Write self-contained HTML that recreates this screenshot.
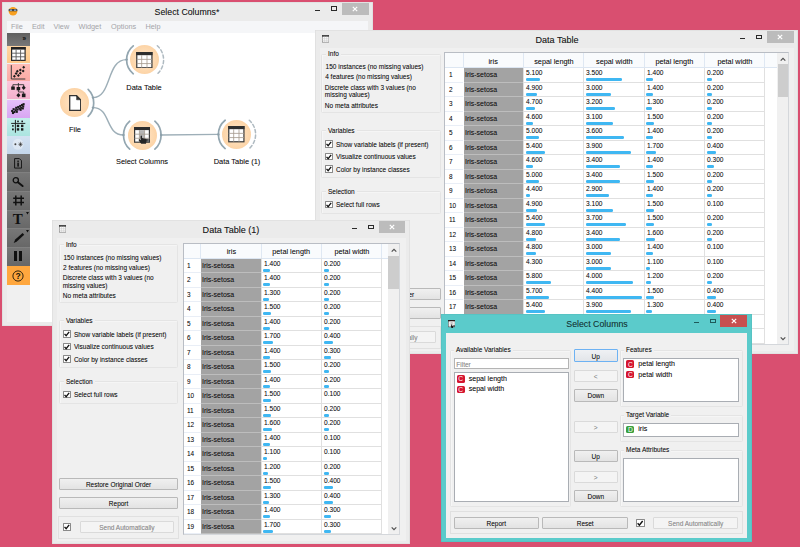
<!DOCTYPE html>
<html><head><meta charset="utf-8"><title>Select Columns</title>
<style>
html,body{margin:0;padding:0}
body{width:800px;height:547px;overflow:hidden;background:#d94f70;position:relative;font-family:"Liberation Sans",sans-serif}
div,svg{position:absolute}
.win{overflow:hidden;box-shadow:inset 0 0 0 0.6px rgba(0,0,0,0.07)}
.g{width:800px;height:547px}
.t{white-space:nowrap;text-shadow:0 0 0.6px rgba(0,0,0,0.35)}
.ti{font-family:"Liberation Sans",sans-serif}
</style></head><body>

<div class="win" style="left:2.00px;top:2.00px;width:371.00px;height:324.00px;background:#ebebeb;z-index:1"><div class="g" style="left:-2.00px;top:-2.00px">
<svg class="a" style="left:7.5px;top:6px" width="10" height="10" viewBox="0 0 10 10"><circle cx="5" cy="5.2" r="4.3" fill="#f7a021"/><rect x="0.6" y="3" width="8.8" height="2.3" rx="0.8" fill="#333"/><rect x="1.6" y="3.5" width="2.6" height="1.3" fill="#9bd"/><rect x="5.8" y="3.5" width="2.6" height="1.3" fill="#9bd"/></svg>
<div class="t ti" style="left:116.70px;width:140.00px;text-align:center;top:1.50px;height:19.60px;line-height:19.60px;font-size:9.8px;color:#222;;transform:scaleX(0.895);transform-origin:50% 50%">Select Columns*</div>
<div style="left:342.00px;top:2.90px;width:26.70px;height:11.70px;background:#bcbcbc"></div>
<svg class="a" style="left:352.35px;top:5.90px" width="6" height="6" viewBox="0 0 6 6"><path d="M0.8 0.8L5.2 5.2M5.2 0.8L0.8 5.2" stroke="#fff" stroke-width="1.2" fill="none"/></svg>
<div style="left:330.70px;top:6.30px;width:6.20px;height:4.90px;border:0.8px solid #2a2a2a;border-top-width:1.7px;box-sizing:border-box"></div>
<div style="left:314.90px;top:9.50px;width:5.10px;height:1.50px;background:#2a2a2a"></div>
<div style="left:6.50px;top:21.00px;width:361.50px;height:11.50px;background:#f5f6f8"></div>
<div class="t" style="left:11.00px;top:19.80px;height:14.60px;line-height:14.60px;font-size:7.3px;color:#a4a4a8;text-shadow:none">File</div>
<div class="t" style="left:32.00px;top:19.80px;height:14.60px;line-height:14.60px;font-size:7.3px;color:#a4a4a8;text-shadow:none">Edit</div>
<div class="t" style="left:53.50px;top:19.80px;height:14.60px;line-height:14.60px;font-size:7.3px;color:#a4a4a8;text-shadow:none">View</div>
<div class="t" style="left:78.50px;top:19.80px;height:14.60px;line-height:14.60px;font-size:7.3px;color:#a4a4a8;text-shadow:none">Widget</div>
<div class="t" style="left:111.00px;top:19.80px;height:14.60px;line-height:14.60px;font-size:7.3px;color:#a4a4a8;text-shadow:none">Options</div>
<div class="t" style="left:145.50px;top:19.80px;height:14.60px;line-height:14.60px;font-size:7.3px;color:#a4a4a8;text-shadow:none">Help</div>
<div style="left:6.50px;top:33.00px;width:361.50px;height:288.50px;background:#fff"></div>
<div style="left:6.90px;top:33.00px;width:22.80px;height:288.50px;background:#f0f0f0"></div>
<div style="left:6.90px;top:33.20px;width:22.80px;height:12.40px;background:linear-gradient(#606060,#787878)"></div>
<div class="t" style="left:6.20px;width:20.00px;text-align:right;top:30.60px;height:16.00px;line-height:16.00px;font-size:8px;color:#0a0a0a;font-weight:bold;text-shadow:none;transform:scaleX(0.8);transform-origin:100% 50%">»</div>
<div style="left:6.90px;top:45.60px;width:22.80px;height:17.90px;background:linear-gradient(#ffd6a3,#fec88a)"></div>
<div style="left:6.90px;top:63.50px;width:22.80px;height:17.60px;background:linear-gradient(#ffbdb6,#fbaaa5)"></div>
<div style="left:6.90px;top:81.10px;width:22.80px;height:18.40px;background:linear-gradient(#fcc7dc,#f4b1cd)"></div>
<div style="left:6.90px;top:99.50px;width:22.80px;height:18.20px;background:linear-gradient(#e6c0fa,#d8a6f2)"></div>
<div style="left:6.90px;top:117.70px;width:22.80px;height:17.90px;background:linear-gradient(#c3efeb,#abe4e0)"></div>
<div style="left:6.90px;top:135.60px;width:22.80px;height:18.10px;background:linear-gradient(#d3e2f2,#c4d6ea)"></div>
<svg class="a" style="left:10.9px;top:47.3px" width="14.7" height="14" viewBox="0 0 14.7 14"><rect x="0.6" y="0.6" width="13.5" height="12.8" fill="#fff" stroke="#2c2c2c" stroke-width="1.2"/><rect x="0" y="0" width="14.7" height="2.6" fill="#222"/><path d="M5.1 2.6V13.4M9.6 2.6V13.4M0.6 6.2H14.1M0.6 9.8H14.1" stroke="#5a5a5a" stroke-width="0.9"/></svg>
<svg class="a" style="left:0;top:0" width="40" height="300" viewBox="0 0 40 300"><path d="M11.3 65.1V79H25.3" stroke="#3a3a3a" stroke-width="1" fill="none"/><g fill="#1c1c1c"><path d="M14.4 74.8L15.9 76.3L14.4 77.8L12.9 76.3Z"/><path d="M16.1 72.0L17.6 73.5L16.1 75.0L14.600000000000001 73.5Z"/><path d="M17.3 69.7L18.8 71.2L17.3 72.7L15.8 71.2Z"/><path d="M18.4 73.9L19.9 75.4L18.4 76.9L16.9 75.4Z"/><path d="M20.3 71.7L21.8 73.2L20.3 74.7L18.8 73.2Z"/><path d="M20.3 68.4L21.8 69.9L20.3 71.4L18.8 69.9Z"/><path d="M23.1 69.4L24.6 70.9L23.1 72.4L21.6 70.9Z"/><path d="M23.7 65.8L25.2 67.3L23.7 68.8L22.2 67.3Z"/></g><path d="M18.4 83V90M12.9 88V84.7H23.7V88M18.4 90V92H23.7V94" stroke="#333" stroke-width="0.9" fill="none"/><g fill="#1c1c1c"><rect x="11.2" y="86.5" width="3.6" height="3.3"/><rect x="16.6" y="87" width="3.6" height="3.3"/><path d="M23.7 85.6L25.7 87.8L23.7 90L21.7 87.8Z"/><path d="M18.4 93L20.4 95.2L18.4 97.4L16.4 95.2Z"/><rect x="21.9" y="93.6" width="3.6" height="3.6"/></g><g fill="#1c1c1c"><rect x="11.15" y="109.95" width="2.1" height="2.1"/><rect x="12.55" y="108.15" width="2.1" height="2.1"/><rect x="13.35" y="110.95" width="2.1" height="2.1"/><rect x="14.55" y="109.15" width="2.1" height="2.1"/><rect x="15.15" y="106.75" width="2.1" height="2.1"/><rect x="16.35" y="108.55" width="2.1" height="2.1"/><rect x="17.15" y="105.95" width="2.1" height="2.1"/><rect x="18.35" y="107.55" width="2.1" height="2.1"/><rect x="19.15" y="104.95" width="2.1" height="2.1"/><rect x="20.15" y="106.75" width="2.1" height="2.1"/><rect x="20.95" y="103.95" width="2.1" height="2.1"/><rect x="22.15" y="105.35" width="2.1" height="2.1"/><rect x="22.55" y="103.15" width="2.1" height="2.1"/><rect x="11.95" y="111.95" width="2.1" height="2.1"/><rect x="15.75" y="110.75" width="2.1" height="2.1"/><rect x="19.55" y="108.75" width="2.1" height="2.1"/><rect x="21.75" y="107.35" width="2.1" height="2.1"/></g><path d="M15.4 119.9V132.7M11.2 123.4H25.3" stroke="#222" stroke-width="1" fill="none"/><g fill="#1c1c1c"><rect x="17.20" y="120.60" width="1.6" height="1.6"/><rect x="21.40" y="120.60" width="1.6" height="1.6"/><rect x="12.10" y="125.10" width="1.6" height="1.6"/><rect x="12.00" y="128.50" width="1.8" height="1.8"/><rect x="16.80" y="124.70" width="2.4" height="2.4"/><rect x="21.00" y="124.70" width="2.4" height="2.4"/><rect x="16.80" y="128.20" width="2.4" height="2.4"/><rect x="21.00" y="128.20" width="2.4" height="2.4"/></g><circle cx="18" cy="144.3" r="5.5" fill="rgba(255,255,255,0.35)"/><circle cx="15.4" cy="144.3" r="1" fill="#444"/><g stroke="#666" stroke-width="0.7"><path d="M20.5 141.8V146.8M18.3 144.3H22.7M19 142.6L22 146M22 142.6L19 146"/></g><circle cx="20.5" cy="144.3" r="0.9" fill="#333"/></svg>
<div style="left:6.90px;top:153.70px;width:22.80px;height:112.30px;background:#6b6b6b"></div>
<div style="left:6.90px;top:153.70px;width:22.80px;height:18.72px;background:linear-gradient(#777,#676767)"></div>
<div style="left:6.90px;top:172.42px;width:22.80px;height:18.72px;background:linear-gradient(#777,#676767)"></div>
<div style="left:6.90px;top:172.12px;width:22.80px;height:0.60px;background:#808080"></div>
<div style="left:6.90px;top:191.14px;width:22.80px;height:18.72px;background:linear-gradient(#777,#676767)"></div>
<div style="left:6.90px;top:190.84px;width:22.80px;height:0.60px;background:#808080"></div>
<div style="left:6.90px;top:209.86px;width:22.80px;height:18.72px;background:linear-gradient(#777,#676767)"></div>
<div style="left:6.90px;top:209.56px;width:22.80px;height:0.60px;background:#808080"></div>
<div style="left:6.90px;top:228.58px;width:22.80px;height:18.72px;background:linear-gradient(#777,#676767)"></div>
<div style="left:6.90px;top:228.28px;width:22.80px;height:0.60px;background:#808080"></div>
<div style="left:6.90px;top:247.30px;width:22.80px;height:18.72px;background:linear-gradient(#777,#676767)"></div>
<div style="left:6.90px;top:247.00px;width:22.80px;height:0.60px;background:#808080"></div>
<svg class="a" style="left:14.1px;top:157.9px" width="8.2" height="10.7" viewBox="0 0 8.2 10.7"><path d="M0.6 0.6H5.4L7.6 2.8V10.1H0.6Z" fill="none" stroke="#151515" stroke-width="1"/><rect x="3.3" y="4.6" width="1.6" height="4" fill="#151515"/><rect x="3.3" y="2.6" width="1.6" height="1.3" fill="#151515"/></svg>
<svg class="a" style="left:11px;top:175px" width="14" height="13" viewBox="0 0 14 13"><circle cx="4.8" cy="5.3" r="2.6" fill="none" stroke="#111" stroke-width="1.3"/><path d="M6.9 7.2L11.6 11" stroke="#111" stroke-width="2" stroke-linecap="round"/></svg>
<svg class="a" style="left:12px;top:194px" width="14" height="13" viewBox="0 0 14 13"><path d="M3.8 1.4V11.6M9.2 1.4V11.6M1.2 4.3H12M1.2 8.4H12" stroke="#111" stroke-width="1.5" fill="none"/></svg>
<div class="t" style="left:7.80px;width:20.00px;text-align:center;top:204.20px;height:30.00px;line-height:30.00px;font-size:15px;color:#111;font-weight:bold;font-family:'Liberation Serif',serif;text-shadow:none">T</div>
<svg class="a" style="left:12.5px;top:232px" width="12" height="12" viewBox="0 0 12 12"><path d="M0.7 11.1L2.2 7.6L9.6 1L11.2 2.8L3.6 9.8Z" fill="#111"/></svg>
<svg class="a" style="left:25.6px;top:211.5px" width="3" height="3" viewBox="0 0 3 3"><path d="M0 0H3L1.5 2.4Z" fill="#111"/></svg>
<svg class="a" style="left:25.6px;top:230px" width="3" height="3" viewBox="0 0 3 3"><path d="M0 0H3L1.5 2.4Z" fill="#111"/></svg>
<div style="left:13.70px;top:250.90px;width:3.40px;height:10.40px;background:#111"></div>
<div style="left:19.10px;top:250.90px;width:3.40px;height:10.40px;background:#111"></div>
<div style="left:6.90px;top:266.00px;width:22.80px;height:18.60px;background:#ffa73e"></div>
<svg class="a" style="left:12.3px;top:269.8px" width="12" height="12" viewBox="0 0 12 12"><circle cx="6" cy="6" r="5.1" fill="none" stroke="#1a1408" stroke-width="0.9"/><text x="6" y="8.9" font-size="8.5" font-weight="bold" text-anchor="middle" font-family="Liberation Sans, sans-serif" fill="#1a1408">?</text></svg>
<svg class="a" style="left:0;top:0" width="400" height="330" viewBox="0 0 400 330"><path d="M93 97.6C112 97.6 106 59.6 126.6 59.6" stroke="#9eafb8" stroke-width="1.4" fill="none"/><path d="M93 107.6C111 107.6 105 135 123.5 135" stroke="#9eafb8" stroke-width="1.4" fill="none"/><path d="M161.1 135L218.4 134.4" stroke="#9eafb8" stroke-width="1.4" fill="none"/><path d="M88.14 89.46A19 19 0 0 1 88.14 116.34" stroke="#93a6b0" stroke-width="1.7" fill="none" stroke-linecap="round"/><path d="M133.27 73.84A18 18 0 0 1 133.27 45.86" stroke="#93a6b0" stroke-width="1.7" fill="none" stroke-linecap="round"/><path d="M157.31 45.73A19 19 0 0 1 157.31 73.97" stroke="#afbac1" stroke-width="1.5" fill="none" stroke-dasharray="3.1 2.4" stroke-linecap="round"/><path d="M129.72 149.17A18.8 18.8 0 0 1 129.72 121.23" stroke="#93a6b0" stroke-width="1.7" fill="none" stroke-linecap="round"/><path d="M154.88 121.23A18.8 18.8 0 0 1 154.88 149.17" stroke="#93a6b0" stroke-width="1.7" fill="none" stroke-linecap="round"/><path d="M225.15 148.54A18.2 18.2 0 0 1 225.15 120.26" stroke="#93a6b0" stroke-width="1.7" fill="none" stroke-linecap="round"/><path d="M249.31 120.28A19 19 0 0 1 249.31 148.52" stroke="#afbac1" stroke-width="1.5" fill="none" stroke-dasharray="3.1 2.4" stroke-linecap="round"/><circle cx="93" cy="97.6" r="1.2" fill="#8da0aa"/><circle cx="93" cy="107.6" r="1.2" fill="#8da0aa"/><circle cx="126.6" cy="59.6" r="1.2" fill="#8da0aa"/><circle cx="123.5" cy="135" r="1.2" fill="#8da0aa"/><circle cx="161.1" cy="135" r="1.2" fill="#8da0aa"/><circle cx="218.4" cy="134.4" r="1.2" fill="#8da0aa"/></svg>
<div style="left:60.20px;top:88.40px;width:29.0px;height:29.0px;border-radius:50%;background:radial-gradient(circle at 50% 50%,#ffe6ca 0%,#fdd8ae 55%,#fbcd9b 92%,rgba(251,205,155,0.4) 100%)"></div>
<div style="left:130.00px;top:45.25px;width:29.2px;height:29.2px;border-radius:50%;background:radial-gradient(circle at 50% 50%,#ffe6ca 0%,#fdd8ae 55%,#fbcd9b 92%,rgba(251,205,155,0.4) 100%)"></div>
<div style="left:127.70px;top:120.60px;width:29.2px;height:29.2px;border-radius:50%;background:radial-gradient(circle at 50% 50%,#ffe6ca 0%,#fdd8ae 55%,#fbcd9b 92%,rgba(251,205,155,0.4) 100%)"></div>
<div style="left:222.00px;top:119.80px;width:29.2px;height:29.2px;border-radius:50%;background:radial-gradient(circle at 50% 50%,#ffe6ca 0%,#fdd8ae 55%,#fbcd9b 92%,rgba(251,205,155,0.4) 100%)"></div>
<svg class="a" style="left:68.9px;top:94.9px" width="12.4" height="16" viewBox="0 0 12.4 16"><path d="M0.7 0.7H7.6L11.7 4.8V15.3H0.7Z" fill="#fff" stroke="#333" stroke-width="1.3"/><path d="M7.6 0.7V4.8H11.7Z" fill="#333" stroke="#333" stroke-width="0.6"/></svg>
<svg class="a" style="left:136.20px;top:51.90px" width="16.70" height="16.40" viewBox="0 0 16 16"><rect x="0.6" y="0.6" width="14.8" height="14.8" fill="#fff" stroke="#3a3a3a" stroke-width="1.2"/><rect x="0" y="0" width="16" height="3.1" fill="#2e2e2e"/><path d="M5.4 3.1V15.4M10.6 3.1V15.4M0.6 7.2H15.4M0.6 11.3H15.4" stroke="#a59a90" stroke-width="0.8"/></svg>
<svg class="a" style="left:228.30px;top:126.30px" width="16.70" height="16.40" viewBox="0 0 16 16"><rect x="0.6" y="0.6" width="14.8" height="14.8" fill="#fff" stroke="#3a3a3a" stroke-width="1.2"/><rect x="0" y="0" width="16" height="3.1" fill="#2e2e2e"/><path d="M5.4 3.1V15.4M10.6 3.1V15.4M0.6 7.2H15.4M0.6 11.3H15.4" stroke="#a59a90" stroke-width="0.8"/></svg>
<svg class="a" style="left:134px;top:127px" width="16" height="16.7" viewBox="0 0 16 16.7"><rect x="0.6" y="0.6" width="14.8" height="14.6" fill="#fff" stroke="#3a3a3a" stroke-width="1.2"/><rect x="0" y="0" width="16" height="3.1" fill="#2e2e2e"/><rect x="5.4" y="3.1" width="5.2" height="8" fill="#b5b5b5"/><path d="M5.4 3.1V15.2M10.6 3.1V15.2M0.6 7.2H15.4M0.6 11.3H15.4" stroke="#a59a90" stroke-width="0.8"/><rect x="11.6" y="11.8" width="3.2" height="3" fill="#555"/><path d="M6.6 9.2C6.6 8.2 8 8.2 8 9.2V11L11.6 11.8C12.6 12 12.8 12.8 12.6 13.8L12 16.7H7.2L4.8 13.4C4.4 12.6 5.4 12 6 12.6L6.6 13.2Z" fill="#262626"/></svg>
<div class="t" style="left:44.60px;width:60.00px;text-align:center;top:122.30px;height:16.00px;line-height:16.00px;font-size:8px;color:#222;;transform:scaleX(0.93);transform-origin:50% 50%">File</div>
<div class="t" style="left:104.40px;width:80.00px;text-align:center;top:79.60px;height:16.00px;line-height:16.00px;font-size:8px;color:#222;;transform:scaleX(0.93);transform-origin:50% 50%">Data Table</div>
<div class="t" style="left:97.00px;width:90.00px;text-align:center;top:154.10px;height:16.00px;line-height:16.00px;font-size:8px;color:#222;;transform:scaleX(0.93);transform-origin:50% 50%">Select Columns</div>
<div class="t" style="left:191.70px;width:90.00px;text-align:center;top:153.50px;height:16.00px;line-height:16.00px;font-size:8px;color:#222;;transform:scaleX(0.93);transform-origin:50% 50%">Data Table (1)</div>
</div></div>
<div class="win" style="left:315.10px;top:30.20px;width:482.90px;height:324.20px;background:#ebebeb;z-index:2"><div class="g" style="left:-315.10px;top:-30.20px">
<svg class="a" style="left:322.00px;top:35.30px" width="7.20" height="7.70" viewBox="0 0 8 8"><rect x="0.3" y="0.3" width="7.4" height="7.4" fill="#fbfbfb" stroke="#6a6a6a" stroke-width="0.6"/><rect x="0" y="0" width="8" height="1.5" fill="#2a2a2a"/><path d="M2.8 1.5V7.7M5.2 1.5V7.7M0.3 3.7H7.7M0.3 5.7H7.7" stroke="#c8c8c8" stroke-width="0.5"/></svg>
<div class="t ti" style="left:496.55px;width:120.00px;text-align:center;top:29.80px;height:19.60px;line-height:19.60px;font-size:9.8px;color:#222;;transform:scaleX(0.925);transform-origin:50% 50%">Data Table</div>
<div style="left:767.00px;top:31.10px;width:26.70px;height:11.70px;background:#bcbcbc"></div>
<svg class="a" style="left:777.35px;top:34.10px" width="6" height="6" viewBox="0 0 6 6"><path d="M0.8 0.8L5.2 5.2M5.2 0.8L0.8 5.2" stroke="#fff" stroke-width="1.2" fill="none"/></svg>
<div style="left:755.70px;top:34.50px;width:6.20px;height:4.90px;border:0.8px solid #2a2a2a;border-top-width:1.7px;box-sizing:border-box"></div>
<div style="left:739.90px;top:37.70px;width:5.10px;height:1.50px;background:#2a2a2a"></div>
<div style="left:319.70px;top:48.40px;width:474.50px;height:302.30px;background:#f0f0f0"></div>
<div style="left:320.90px;top:54.20px;width:120.40px;height:59.20px;border:1px solid #e4e4e4;box-sizing:border-box;border-radius:1.5px;box-shadow:inset 0.6px 0.6px 0 rgba(255,255,255,0.7)"></div>
<div style="left:326.00px;top:53.70px;width:14.84px;height:2.50px;background:#f0f0f0"></div>
<div class="t" style="left:328.00px;top:47.20px;height:13.00px;line-height:13.00px;font-size:6.5px;color:#1a1a1a;">Info</div>
<div class="t" style="left:325.60px;top:59.80px;height:13.00px;line-height:13.00px;font-size:6.5px;color:#1a1a1a;">150 instances (no missing values)</div>
<div class="t" style="left:325.20px;top:70.10px;height:13.00px;line-height:13.00px;font-size:6.5px;color:#1a1a1a;">4 features (no missing values)</div>
<div class="t" style="left:324.80px;top:81.00px;height:13.00px;line-height:13.00px;font-size:6.5px;color:#1a1a1a;">Discrete class with 3 values (no</div>
<div class="t" style="left:324.80px;top:88.10px;height:13.00px;line-height:13.00px;font-size:6.5px;color:#1a1a1a;">missing values)</div>
<div class="t" style="left:324.80px;top:98.90px;height:13.00px;line-height:13.00px;font-size:6.5px;color:#1a1a1a;">No meta attributes</div>
<div style="left:320.90px;top:130.40px;width:120.40px;height:47.60px;border:1px solid #e4e4e4;box-sizing:border-box;border-radius:1.5px;box-shadow:inset 0.6px 0.6px 0 rgba(255,255,255,0.7)"></div>
<div style="left:326.00px;top:129.90px;width:30.61px;height:2.50px;background:#f0f0f0"></div>
<div class="t" style="left:328.00px;top:124.40px;height:13.00px;line-height:13.00px;font-size:6.5px;color:#1a1a1a;">Variables</div>
<div style="left:325.30px;top:140.40px;width:7.60px;height:7.60px;background:#fff;border:0.8px solid #8a8a8a;box-sizing:border-box;border-radius:0.5px"></div>
<svg class="a" style="left:325.30px;top:140.40px" width="7.6" height="7.6" viewBox="0 0 8 8"><path d="M1.6 4.1L3.3 6L6.5 1.9" stroke="#111" stroke-width="1.4" fill="none"/></svg>
<div class="t" style="left:336.00px;top:137.70px;height:13.00px;line-height:13.00px;font-size:6.5px;color:#1a1a1a;">Show variable labels (if present)</div>
<div style="left:325.30px;top:152.60px;width:7.60px;height:7.60px;background:#fff;border:0.8px solid #8a8a8a;box-sizing:border-box;border-radius:0.5px"></div>
<svg class="a" style="left:325.30px;top:152.60px" width="7.6" height="7.6" viewBox="0 0 8 8"><path d="M1.6 4.1L3.3 6L6.5 1.9" stroke="#111" stroke-width="1.4" fill="none"/></svg>
<div class="t" style="left:336.00px;top:150.40px;height:13.00px;line-height:13.00px;font-size:6.5px;color:#1a1a1a;">Visualize continuous values</div>
<div style="left:325.30px;top:165.20px;width:7.60px;height:7.60px;background:#fff;border:0.8px solid #8a8a8a;box-sizing:border-box;border-radius:0.5px"></div>
<svg class="a" style="left:325.30px;top:165.20px" width="7.6" height="7.6" viewBox="0 0 8 8"><path d="M1.6 4.1L3.3 6L6.5 1.9" stroke="#111" stroke-width="1.4" fill="none"/></svg>
<div class="t" style="left:336.00px;top:163.00px;height:13.00px;line-height:13.00px;font-size:6.5px;color:#1a1a1a;">Color by instance classes</div>
<div style="left:320.90px;top:190.70px;width:120.40px;height:22.90px;border:1px solid #e4e4e4;box-sizing:border-box;border-radius:1.5px;box-shadow:inset 0.6px 0.6px 0 rgba(255,255,255,0.7)"></div>
<div style="left:326.00px;top:190.20px;width:30.74px;height:2.50px;background:#f0f0f0"></div>
<div class="t" style="left:328.00px;top:184.70px;height:13.00px;line-height:13.00px;font-size:6.5px;color:#1a1a1a;">Selection</div>
<div style="left:325.30px;top:200.50px;width:7.60px;height:7.60px;background:#fff;border:0.8px solid #8a8a8a;box-sizing:border-box;border-radius:0.5px"></div>
<svg class="a" style="left:325.30px;top:200.50px" width="7.6" height="7.6" viewBox="0 0 8 8"><path d="M1.6 4.1L3.3 6L6.5 1.9" stroke="#111" stroke-width="1.4" fill="none"/></svg>
<div class="t" style="left:336.00px;top:197.80px;height:13.00px;line-height:13.00px;font-size:6.5px;color:#1a1a1a;">Select full rows</div>
<div style="left:321.70px;top:287.70px;width:119.60px;height:12.30px;background:linear-gradient(#f0f0f0,#e3e3e3);border:1px solid #b9b9b9;box-sizing:border-box;border-radius:1px"></div>
<div class="t" style="left:321.70px;width:119.60px;text-align:center;top:287.85px;height:13.00px;line-height:13.00px;font-size:6.5px;color:#1a1a1a;">Restore Original Order</div>
<div style="left:321.70px;top:306.90px;width:119.60px;height:12.30px;background:linear-gradient(#f0f0f0,#e3e3e3);border:1px solid #b9b9b9;box-sizing:border-box;border-radius:1px"></div>
<div class="t" style="left:321.70px;width:119.60px;text-align:center;top:307.05px;height:13.00px;line-height:13.00px;font-size:6.5px;color:#1a1a1a;">Report</div>
<div style="left:320.90px;top:325.80px;width:120.60px;height:22.90px;border:1px solid #e0e0e0;box-sizing:border-box"></div>
<div style="left:325.90px;top:333.40px;width:7.60px;height:7.60px;background:#fff;border:0.8px solid #8a8a8a;box-sizing:border-box;border-radius:0.5px"></div>
<svg class="a" style="left:325.90px;top:333.40px" width="7.6" height="7.6" viewBox="0 0 8 8"><path d="M1.6 4.1L3.3 6L6.5 1.9" stroke="#111" stroke-width="1.4" fill="none"/></svg>
<div style="left:343.10px;top:331.40px;width:93.40px;height:12.00px;background:#f4f4f4;border:1px solid #dadada;box-sizing:border-box;border-radius:1px"></div>
<div class="t" style="left:343.10px;width:93.40px;text-align:center;top:331.40px;height:13.00px;line-height:13.00px;font-size:6.5px;color:#9a9a9a;">Send Automatically</div>
<div style="left:445.30px;top:52.70px;width:342.90px;height:291.00px;background:#fff;overflow:hidden"><div class="g" style="left:-445.30px;top:-52.70px">
<div style="left:445.30px;top:52.70px;width:332.40px;height:14.80px;background:#f9fbfd"></div>
<div style="left:445.30px;top:67.00px;width:332.40px;height:1.00px;background:#dce6f2"></div>
<div class="t" style="left:463.30px;width:60.30px;text-align:center;top:55.20px;height:14.80px;line-height:14.80px;font-size:7.4px;color:#222;;transform:scaleX(0.99);transform-origin:50% 50%">iris</div>
<div style="left:523.10px;top:52.70px;width:1.00px;height:14.80px;background:#dfe8f3"></div>
<div class="t" style="left:523.60px;width:59.90px;text-align:center;top:55.20px;height:14.80px;line-height:14.80px;font-size:7.4px;color:#222;;transform:scaleX(0.99);transform-origin:50% 50%">sepal length</div>
<div style="left:583.00px;top:52.70px;width:1.00px;height:14.80px;background:#dfe8f3"></div>
<div class="t" style="left:583.50px;width:60.60px;text-align:center;top:55.20px;height:14.80px;line-height:14.80px;font-size:7.4px;color:#222;;transform:scaleX(0.99);transform-origin:50% 50%">sepal width</div>
<div style="left:643.60px;top:52.70px;width:1.00px;height:14.80px;background:#dfe8f3"></div>
<div class="t" style="left:644.10px;width:60.70px;text-align:center;top:55.20px;height:14.80px;line-height:14.80px;font-size:7.4px;color:#222;;transform:scaleX(0.99);transform-origin:50% 50%">petal length</div>
<div style="left:704.30px;top:52.70px;width:1.00px;height:14.80px;background:#dfe8f3"></div>
<div class="t" style="left:704.80px;width:59.90px;text-align:center;top:55.20px;height:14.80px;line-height:14.80px;font-size:7.4px;color:#222;;transform:scaleX(0.99);transform-origin:50% 50%">petal width</div>
<div style="left:764.20px;top:52.70px;width:1.00px;height:14.80px;background:#dfe8f3"></div>
<div style="left:462.80px;top:52.70px;width:1.00px;height:14.80px;background:#dfe8f3"></div>
<div class="t" style="left:448.50px;top:68.00px;height:14.60px;line-height:14.60px;font-size:7.3px;color:#222;;transform:scaleX(0.88);transform-origin:0 50%">1</div>
<div style="left:463.90px;top:68.00px;width:59.30px;height:14.00px;background:#a3a3a3"></div>
<div class="t" style="left:465.10px;top:68.00px;height:14.60px;line-height:14.60px;font-size:7.3px;color:#1a1a1a;;transform:scaleX(0.955);transform-origin:0 50%">Iris-setosa</div>
<div style="left:445.30px;top:82.00px;width:18.00px;height:1.00px;background:#e9eef6"></div>
<div style="left:463.90px;top:82.00px;width:59.30px;height:1.00px;background:#bdbdbd"></div>
<div style="left:523.60px;top:82.00px;width:241.10px;height:1.00px;background:#e0e0e0"></div>
<div class="t" style="left:526.00px;top:66.00px;height:14.20px;line-height:14.20px;font-size:7.1px;color:#1e1e1e;;transform:scaleX(0.93);transform-origin:0 50%">5.100</div>
<div style="left:525.70px;top:78.00px;width:14.67px;height:2.60px;background:#3fb7f2;border-radius:1.3px"></div>
<div class="t" style="left:585.90px;top:66.00px;height:14.20px;line-height:14.20px;font-size:7.1px;color:#1e1e1e;;transform:scaleX(0.93);transform-origin:0 50%">3.500</div>
<div style="left:585.60px;top:78.00px;width:36.25px;height:2.60px;background:#3fb7f2;border-radius:1.3px"></div>
<div class="t" style="left:646.50px;top:66.00px;height:14.20px;line-height:14.20px;font-size:7.1px;color:#1e1e1e;;transform:scaleX(0.93);transform-origin:0 50%">1.400</div>
<div style="left:646.20px;top:78.00px;width:6.61px;height:2.60px;background:#3fb7f2;border-radius:1.3px"></div>
<div class="t" style="left:707.20px;top:66.00px;height:14.20px;line-height:14.20px;font-size:7.1px;color:#1e1e1e;;transform:scaleX(0.93);transform-origin:0 50%">0.200</div>
<div style="left:706.90px;top:78.00px;width:5.19px;height:2.60px;background:#3fb7f2;border-radius:1.3px"></div>
<div class="t" style="left:448.50px;top:83.00px;height:14.60px;line-height:14.60px;font-size:7.3px;color:#222;;transform:scaleX(0.88);transform-origin:0 50%">2</div>
<div style="left:463.90px;top:83.00px;width:59.30px;height:13.00px;background:#a3a3a3"></div>
<div class="t" style="left:465.10px;top:83.00px;height:14.60px;line-height:14.60px;font-size:7.3px;color:#1a1a1a;;transform:scaleX(0.955);transform-origin:0 50%">Iris-setosa</div>
<div style="left:445.30px;top:96.00px;width:18.00px;height:1.00px;background:#e9eef6"></div>
<div style="left:463.90px;top:96.00px;width:59.30px;height:1.00px;background:#bdbdbd"></div>
<div style="left:523.60px;top:96.00px;width:241.10px;height:1.00px;background:#e0e0e0"></div>
<div class="t" style="left:526.00px;top:81.00px;height:14.20px;line-height:14.20px;font-size:7.1px;color:#1e1e1e;;transform:scaleX(0.93);transform-origin:0 50%">4.900</div>
<div style="left:525.70px;top:93.00px;width:11.75px;height:2.60px;background:#3fb7f2;border-radius:1.3px"></div>
<div class="t" style="left:585.90px;top:81.00px;height:14.20px;line-height:14.20px;font-size:7.1px;color:#1e1e1e;;transform:scaleX(0.93);transform-origin:0 50%">3.000</div>
<div style="left:585.60px;top:93.00px;width:25.17px;height:2.60px;background:#3fb7f2;border-radius:1.3px"></div>
<div class="t" style="left:646.50px;top:81.00px;height:14.20px;line-height:14.20px;font-size:7.1px;color:#1e1e1e;;transform:scaleX(0.93);transform-origin:0 50%">1.400</div>
<div style="left:646.20px;top:93.00px;width:6.61px;height:2.60px;background:#3fb7f2;border-radius:1.3px"></div>
<div class="t" style="left:707.20px;top:81.00px;height:14.20px;line-height:14.20px;font-size:7.1px;color:#1e1e1e;;transform:scaleX(0.93);transform-origin:0 50%">0.200</div>
<div style="left:706.90px;top:93.00px;width:5.19px;height:2.60px;background:#3fb7f2;border-radius:1.3px"></div>
<div class="t" style="left:448.50px;top:97.00px;height:14.60px;line-height:14.60px;font-size:7.3px;color:#222;;transform:scaleX(0.88);transform-origin:0 50%">3</div>
<div style="left:463.90px;top:97.00px;width:59.30px;height:14.00px;background:#a3a3a3"></div>
<div class="t" style="left:465.10px;top:97.00px;height:14.60px;line-height:14.60px;font-size:7.3px;color:#1a1a1a;;transform:scaleX(0.955);transform-origin:0 50%">Iris-setosa</div>
<div style="left:445.30px;top:111.00px;width:18.00px;height:1.00px;background:#e9eef6"></div>
<div style="left:463.90px;top:111.00px;width:59.30px;height:1.00px;background:#bdbdbd"></div>
<div style="left:523.60px;top:111.00px;width:241.10px;height:1.00px;background:#e0e0e0"></div>
<div class="t" style="left:526.00px;top:95.00px;height:14.20px;line-height:14.20px;font-size:7.1px;color:#1e1e1e;;transform:scaleX(0.93);transform-origin:0 50%">4.700</div>
<div style="left:525.70px;top:107.00px;width:8.83px;height:2.60px;background:#3fb7f2;border-radius:1.3px"></div>
<div class="t" style="left:585.90px;top:95.00px;height:14.20px;line-height:14.20px;font-size:7.1px;color:#1e1e1e;;transform:scaleX(0.93);transform-origin:0 50%">3.200</div>
<div style="left:585.60px;top:107.00px;width:29.60px;height:2.60px;background:#3fb7f2;border-radius:1.3px"></div>
<div class="t" style="left:646.50px;top:95.00px;height:14.20px;line-height:14.20px;font-size:7.1px;color:#1e1e1e;;transform:scaleX(0.93);transform-origin:0 50%">1.300</div>
<div style="left:646.20px;top:107.00px;width:5.71px;height:2.60px;background:#3fb7f2;border-radius:1.3px"></div>
<div class="t" style="left:707.20px;top:95.00px;height:14.20px;line-height:14.20px;font-size:7.1px;color:#1e1e1e;;transform:scaleX(0.93);transform-origin:0 50%">0.200</div>
<div style="left:706.90px;top:107.00px;width:5.19px;height:2.60px;background:#3fb7f2;border-radius:1.3px"></div>
<div class="t" style="left:448.50px;top:112.00px;height:14.60px;line-height:14.60px;font-size:7.3px;color:#222;;transform:scaleX(0.88);transform-origin:0 50%">4</div>
<div style="left:463.90px;top:112.00px;width:59.30px;height:13.00px;background:#a3a3a3"></div>
<div class="t" style="left:465.10px;top:112.00px;height:14.60px;line-height:14.60px;font-size:7.3px;color:#1a1a1a;;transform:scaleX(0.955);transform-origin:0 50%">Iris-setosa</div>
<div style="left:445.30px;top:125.00px;width:18.00px;height:1.00px;background:#e9eef6"></div>
<div style="left:463.90px;top:125.00px;width:59.30px;height:1.00px;background:#bdbdbd"></div>
<div style="left:523.60px;top:125.00px;width:241.10px;height:1.00px;background:#e0e0e0"></div>
<div class="t" style="left:526.00px;top:110.00px;height:14.20px;line-height:14.20px;font-size:7.1px;color:#1e1e1e;;transform:scaleX(0.93);transform-origin:0 50%">4.600</div>
<div style="left:525.70px;top:122.00px;width:7.38px;height:2.60px;background:#3fb7f2;border-radius:1.3px"></div>
<div class="t" style="left:585.90px;top:110.00px;height:14.20px;line-height:14.20px;font-size:7.1px;color:#1e1e1e;;transform:scaleX(0.93);transform-origin:0 50%">3.100</div>
<div style="left:585.60px;top:122.00px;width:27.38px;height:2.60px;background:#3fb7f2;border-radius:1.3px"></div>
<div class="t" style="left:646.50px;top:110.00px;height:14.20px;line-height:14.20px;font-size:7.1px;color:#1e1e1e;;transform:scaleX(0.93);transform-origin:0 50%">1.500</div>
<div style="left:646.20px;top:122.00px;width:7.52px;height:2.60px;background:#3fb7f2;border-radius:1.3px"></div>
<div class="t" style="left:707.20px;top:110.00px;height:14.20px;line-height:14.20px;font-size:7.1px;color:#1e1e1e;;transform:scaleX(0.93);transform-origin:0 50%">0.200</div>
<div style="left:706.90px;top:122.00px;width:5.19px;height:2.60px;background:#3fb7f2;border-radius:1.3px"></div>
<div class="t" style="left:448.50px;top:126.00px;height:14.60px;line-height:14.60px;font-size:7.3px;color:#222;;transform:scaleX(0.88);transform-origin:0 50%">5</div>
<div style="left:463.90px;top:126.00px;width:59.30px;height:14.00px;background:#a3a3a3"></div>
<div class="t" style="left:465.10px;top:126.00px;height:14.60px;line-height:14.60px;font-size:7.3px;color:#1a1a1a;;transform:scaleX(0.955);transform-origin:0 50%">Iris-setosa</div>
<div style="left:445.30px;top:140.00px;width:18.00px;height:1.00px;background:#e9eef6"></div>
<div style="left:463.90px;top:140.00px;width:59.30px;height:1.00px;background:#bdbdbd"></div>
<div style="left:523.60px;top:140.00px;width:241.10px;height:1.00px;background:#e0e0e0"></div>
<div class="t" style="left:526.00px;top:124.00px;height:14.20px;line-height:14.20px;font-size:7.1px;color:#1e1e1e;;transform:scaleX(0.93);transform-origin:0 50%">5.000</div>
<div style="left:525.70px;top:136.00px;width:13.21px;height:2.60px;background:#3fb7f2;border-radius:1.3px"></div>
<div class="t" style="left:585.90px;top:124.00px;height:14.20px;line-height:14.20px;font-size:7.1px;color:#1e1e1e;;transform:scaleX(0.93);transform-origin:0 50%">3.600</div>
<div style="left:585.60px;top:136.00px;width:38.47px;height:2.60px;background:#3fb7f2;border-radius:1.3px"></div>
<div class="t" style="left:646.50px;top:124.00px;height:14.20px;line-height:14.20px;font-size:7.1px;color:#1e1e1e;;transform:scaleX(0.93);transform-origin:0 50%">1.400</div>
<div style="left:646.20px;top:136.00px;width:6.61px;height:2.60px;background:#3fb7f2;border-radius:1.3px"></div>
<div class="t" style="left:707.20px;top:124.00px;height:14.20px;line-height:14.20px;font-size:7.1px;color:#1e1e1e;;transform:scaleX(0.93);transform-origin:0 50%">0.200</div>
<div style="left:706.90px;top:136.00px;width:5.19px;height:2.60px;background:#3fb7f2;border-radius:1.3px"></div>
<div class="t" style="left:448.50px;top:141.00px;height:14.60px;line-height:14.60px;font-size:7.3px;color:#222;;transform:scaleX(0.88);transform-origin:0 50%">6</div>
<div style="left:463.90px;top:141.00px;width:59.30px;height:13.00px;background:#a3a3a3"></div>
<div class="t" style="left:465.10px;top:141.00px;height:14.60px;line-height:14.60px;font-size:7.3px;color:#1a1a1a;;transform:scaleX(0.955);transform-origin:0 50%">Iris-setosa</div>
<div style="left:445.30px;top:154.00px;width:18.00px;height:1.00px;background:#e9eef6"></div>
<div style="left:463.90px;top:154.00px;width:59.30px;height:1.00px;background:#bdbdbd"></div>
<div style="left:523.60px;top:154.00px;width:241.10px;height:1.00px;background:#e0e0e0"></div>
<div class="t" style="left:526.00px;top:139.00px;height:14.20px;line-height:14.20px;font-size:7.1px;color:#1e1e1e;;transform:scaleX(0.93);transform-origin:0 50%">5.400</div>
<div style="left:525.70px;top:151.00px;width:19.04px;height:2.60px;background:#3fb7f2;border-radius:1.3px"></div>
<div class="t" style="left:585.90px;top:139.00px;height:14.20px;line-height:14.20px;font-size:7.1px;color:#1e1e1e;;transform:scaleX(0.93);transform-origin:0 50%">3.900</div>
<div style="left:585.60px;top:151.00px;width:45.12px;height:2.60px;background:#3fb7f2;border-radius:1.3px"></div>
<div class="t" style="left:646.50px;top:139.00px;height:14.20px;line-height:14.20px;font-size:7.1px;color:#1e1e1e;;transform:scaleX(0.93);transform-origin:0 50%">1.700</div>
<div style="left:646.20px;top:151.00px;width:9.32px;height:2.60px;background:#3fb7f2;border-radius:1.3px"></div>
<div class="t" style="left:707.20px;top:139.00px;height:14.20px;line-height:14.20px;font-size:7.1px;color:#1e1e1e;;transform:scaleX(0.93);transform-origin:0 50%">0.400</div>
<div style="left:706.90px;top:151.00px;width:9.56px;height:2.60px;background:#3fb7f2;border-radius:1.3px"></div>
<div class="t" style="left:448.50px;top:155.00px;height:14.60px;line-height:14.60px;font-size:7.3px;color:#222;;transform:scaleX(0.88);transform-origin:0 50%">7</div>
<div style="left:463.90px;top:155.00px;width:59.30px;height:14.00px;background:#a3a3a3"></div>
<div class="t" style="left:465.10px;top:155.00px;height:14.60px;line-height:14.60px;font-size:7.3px;color:#1a1a1a;;transform:scaleX(0.955);transform-origin:0 50%">Iris-setosa</div>
<div style="left:445.30px;top:169.00px;width:18.00px;height:1.00px;background:#e9eef6"></div>
<div style="left:463.90px;top:169.00px;width:59.30px;height:1.00px;background:#bdbdbd"></div>
<div style="left:523.60px;top:169.00px;width:241.10px;height:1.00px;background:#e0e0e0"></div>
<div class="t" style="left:526.00px;top:153.00px;height:14.20px;line-height:14.20px;font-size:7.1px;color:#1e1e1e;;transform:scaleX(0.93);transform-origin:0 50%">4.600</div>
<div style="left:525.70px;top:165.00px;width:7.38px;height:2.60px;background:#3fb7f2;border-radius:1.3px"></div>
<div class="t" style="left:585.90px;top:153.00px;height:14.20px;line-height:14.20px;font-size:7.1px;color:#1e1e1e;;transform:scaleX(0.93);transform-origin:0 50%">3.400</div>
<div style="left:585.60px;top:165.00px;width:34.03px;height:2.60px;background:#3fb7f2;border-radius:1.3px"></div>
<div class="t" style="left:646.50px;top:153.00px;height:14.20px;line-height:14.20px;font-size:7.1px;color:#1e1e1e;;transform:scaleX(0.93);transform-origin:0 50%">1.400</div>
<div style="left:646.20px;top:165.00px;width:6.61px;height:2.60px;background:#3fb7f2;border-radius:1.3px"></div>
<div class="t" style="left:707.20px;top:153.00px;height:14.20px;line-height:14.20px;font-size:7.1px;color:#1e1e1e;;transform:scaleX(0.93);transform-origin:0 50%">0.300</div>
<div style="left:706.90px;top:165.00px;width:7.38px;height:2.60px;background:#3fb7f2;border-radius:1.3px"></div>
<div class="t" style="left:448.50px;top:170.00px;height:14.60px;line-height:14.60px;font-size:7.3px;color:#222;;transform:scaleX(0.88);transform-origin:0 50%">8</div>
<div style="left:463.90px;top:170.00px;width:59.30px;height:13.00px;background:#a3a3a3"></div>
<div class="t" style="left:465.10px;top:170.00px;height:14.60px;line-height:14.60px;font-size:7.3px;color:#1a1a1a;;transform:scaleX(0.955);transform-origin:0 50%">Iris-setosa</div>
<div style="left:445.30px;top:183.00px;width:18.00px;height:1.00px;background:#e9eef6"></div>
<div style="left:463.90px;top:183.00px;width:59.30px;height:1.00px;background:#bdbdbd"></div>
<div style="left:523.60px;top:183.00px;width:241.10px;height:1.00px;background:#e0e0e0"></div>
<div class="t" style="left:526.00px;top:168.00px;height:14.20px;line-height:14.20px;font-size:7.1px;color:#1e1e1e;;transform:scaleX(0.93);transform-origin:0 50%">5.000</div>
<div style="left:525.70px;top:180.00px;width:13.21px;height:2.60px;background:#3fb7f2;border-radius:1.3px"></div>
<div class="t" style="left:585.90px;top:168.00px;height:14.20px;line-height:14.20px;font-size:7.1px;color:#1e1e1e;;transform:scaleX(0.93);transform-origin:0 50%">3.400</div>
<div style="left:585.60px;top:180.00px;width:34.03px;height:2.60px;background:#3fb7f2;border-radius:1.3px"></div>
<div class="t" style="left:646.50px;top:168.00px;height:14.20px;line-height:14.20px;font-size:7.1px;color:#1e1e1e;;transform:scaleX(0.93);transform-origin:0 50%">1.500</div>
<div style="left:646.20px;top:180.00px;width:7.52px;height:2.60px;background:#3fb7f2;border-radius:1.3px"></div>
<div class="t" style="left:707.20px;top:168.00px;height:14.20px;line-height:14.20px;font-size:7.1px;color:#1e1e1e;;transform:scaleX(0.93);transform-origin:0 50%">0.200</div>
<div style="left:706.90px;top:180.00px;width:5.19px;height:2.60px;background:#3fb7f2;border-radius:1.3px"></div>
<div class="t" style="left:448.50px;top:184.00px;height:14.60px;line-height:14.60px;font-size:7.3px;color:#222;;transform:scaleX(0.88);transform-origin:0 50%">9</div>
<div style="left:463.90px;top:184.00px;width:59.30px;height:14.00px;background:#a3a3a3"></div>
<div class="t" style="left:465.10px;top:184.00px;height:14.60px;line-height:14.60px;font-size:7.3px;color:#1a1a1a;;transform:scaleX(0.955);transform-origin:0 50%">Iris-setosa</div>
<div style="left:445.30px;top:198.00px;width:18.00px;height:1.00px;background:#e9eef6"></div>
<div style="left:463.90px;top:198.00px;width:59.30px;height:1.00px;background:#bdbdbd"></div>
<div style="left:523.60px;top:198.00px;width:241.10px;height:1.00px;background:#e0e0e0"></div>
<div class="t" style="left:526.00px;top:182.00px;height:14.20px;line-height:14.20px;font-size:7.1px;color:#1e1e1e;;transform:scaleX(0.93);transform-origin:0 50%">4.400</div>
<div style="left:525.70px;top:194.00px;width:4.46px;height:2.60px;background:#3fb7f2;border-radius:1.3px"></div>
<div class="t" style="left:585.90px;top:182.00px;height:14.20px;line-height:14.20px;font-size:7.1px;color:#1e1e1e;;transform:scaleX(0.93);transform-origin:0 50%">2.900</div>
<div style="left:585.60px;top:194.00px;width:22.95px;height:2.60px;background:#3fb7f2;border-radius:1.3px"></div>
<div class="t" style="left:646.50px;top:182.00px;height:14.20px;line-height:14.20px;font-size:7.1px;color:#1e1e1e;;transform:scaleX(0.93);transform-origin:0 50%">1.400</div>
<div style="left:646.20px;top:194.00px;width:6.61px;height:2.60px;background:#3fb7f2;border-radius:1.3px"></div>
<div class="t" style="left:707.20px;top:182.00px;height:14.20px;line-height:14.20px;font-size:7.1px;color:#1e1e1e;;transform:scaleX(0.93);transform-origin:0 50%">0.200</div>
<div style="left:706.90px;top:194.00px;width:5.19px;height:2.60px;background:#3fb7f2;border-radius:1.3px"></div>
<div class="t" style="left:448.50px;top:199.00px;height:14.60px;line-height:14.60px;font-size:7.3px;color:#222;;transform:scaleX(0.88);transform-origin:0 50%">10</div>
<div style="left:463.90px;top:199.00px;width:59.30px;height:13.00px;background:#a3a3a3"></div>
<div class="t" style="left:465.10px;top:199.00px;height:14.60px;line-height:14.60px;font-size:7.3px;color:#1a1a1a;;transform:scaleX(0.955);transform-origin:0 50%">Iris-setosa</div>
<div style="left:445.30px;top:212.00px;width:18.00px;height:1.00px;background:#e9eef6"></div>
<div style="left:463.90px;top:212.00px;width:59.30px;height:1.00px;background:#bdbdbd"></div>
<div style="left:523.60px;top:212.00px;width:241.10px;height:1.00px;background:#e0e0e0"></div>
<div class="t" style="left:526.00px;top:197.00px;height:14.20px;line-height:14.20px;font-size:7.1px;color:#1e1e1e;;transform:scaleX(0.93);transform-origin:0 50%">4.900</div>
<div style="left:525.70px;top:209.00px;width:11.75px;height:2.60px;background:#3fb7f2;border-radius:1.3px"></div>
<div class="t" style="left:585.90px;top:197.00px;height:14.20px;line-height:14.20px;font-size:7.1px;color:#1e1e1e;;transform:scaleX(0.93);transform-origin:0 50%">3.100</div>
<div style="left:585.60px;top:209.00px;width:27.38px;height:2.60px;background:#3fb7f2;border-radius:1.3px"></div>
<div class="t" style="left:646.50px;top:197.00px;height:14.20px;line-height:14.20px;font-size:7.1px;color:#1e1e1e;;transform:scaleX(0.93);transform-origin:0 50%">1.500</div>
<div style="left:646.20px;top:209.00px;width:7.52px;height:2.60px;background:#3fb7f2;border-radius:1.3px"></div>
<div class="t" style="left:707.20px;top:197.00px;height:14.20px;line-height:14.20px;font-size:7.1px;color:#1e1e1e;;transform:scaleX(0.93);transform-origin:0 50%">0.100</div>
<div class="t" style="left:448.50px;top:213.00px;height:14.60px;line-height:14.60px;font-size:7.3px;color:#222;;transform:scaleX(0.88);transform-origin:0 50%">11</div>
<div style="left:463.90px;top:213.00px;width:59.30px;height:14.00px;background:#a3a3a3"></div>
<div class="t" style="left:465.10px;top:213.00px;height:14.60px;line-height:14.60px;font-size:7.3px;color:#1a1a1a;;transform:scaleX(0.955);transform-origin:0 50%">Iris-setosa</div>
<div style="left:445.30px;top:227.00px;width:18.00px;height:1.00px;background:#e9eef6"></div>
<div style="left:463.90px;top:227.00px;width:59.30px;height:1.00px;background:#bdbdbd"></div>
<div style="left:523.60px;top:227.00px;width:241.10px;height:1.00px;background:#e0e0e0"></div>
<div class="t" style="left:526.00px;top:211.00px;height:14.20px;line-height:14.20px;font-size:7.1px;color:#1e1e1e;;transform:scaleX(0.93);transform-origin:0 50%">5.400</div>
<div style="left:525.70px;top:223.00px;width:19.04px;height:2.60px;background:#3fb7f2;border-radius:1.3px"></div>
<div class="t" style="left:585.90px;top:211.00px;height:14.20px;line-height:14.20px;font-size:7.1px;color:#1e1e1e;;transform:scaleX(0.93);transform-origin:0 50%">3.700</div>
<div style="left:585.60px;top:223.00px;width:40.68px;height:2.60px;background:#3fb7f2;border-radius:1.3px"></div>
<div class="t" style="left:646.50px;top:211.00px;height:14.20px;line-height:14.20px;font-size:7.1px;color:#1e1e1e;;transform:scaleX(0.93);transform-origin:0 50%">1.500</div>
<div style="left:646.20px;top:223.00px;width:7.52px;height:2.60px;background:#3fb7f2;border-radius:1.3px"></div>
<div class="t" style="left:707.20px;top:211.00px;height:14.20px;line-height:14.20px;font-size:7.1px;color:#1e1e1e;;transform:scaleX(0.93);transform-origin:0 50%">0.200</div>
<div style="left:706.90px;top:223.00px;width:5.19px;height:2.60px;background:#3fb7f2;border-radius:1.3px"></div>
<div class="t" style="left:448.50px;top:228.00px;height:14.60px;line-height:14.60px;font-size:7.3px;color:#222;;transform:scaleX(0.88);transform-origin:0 50%">12</div>
<div style="left:463.90px;top:228.00px;width:59.30px;height:13.00px;background:#a3a3a3"></div>
<div class="t" style="left:465.10px;top:228.00px;height:14.60px;line-height:14.60px;font-size:7.3px;color:#1a1a1a;;transform:scaleX(0.955);transform-origin:0 50%">Iris-setosa</div>
<div style="left:445.30px;top:241.00px;width:18.00px;height:1.00px;background:#e9eef6"></div>
<div style="left:463.90px;top:241.00px;width:59.30px;height:1.00px;background:#bdbdbd"></div>
<div style="left:523.60px;top:241.00px;width:241.10px;height:1.00px;background:#e0e0e0"></div>
<div class="t" style="left:526.00px;top:226.00px;height:14.20px;line-height:14.20px;font-size:7.1px;color:#1e1e1e;;transform:scaleX(0.93);transform-origin:0 50%">4.800</div>
<div style="left:525.70px;top:238.00px;width:10.29px;height:2.60px;background:#3fb7f2;border-radius:1.3px"></div>
<div class="t" style="left:585.90px;top:226.00px;height:14.20px;line-height:14.20px;font-size:7.1px;color:#1e1e1e;;transform:scaleX(0.93);transform-origin:0 50%">3.400</div>
<div style="left:585.60px;top:238.00px;width:34.03px;height:2.60px;background:#3fb7f2;border-radius:1.3px"></div>
<div class="t" style="left:646.50px;top:226.00px;height:14.20px;line-height:14.20px;font-size:7.1px;color:#1e1e1e;;transform:scaleX(0.93);transform-origin:0 50%">1.600</div>
<div style="left:646.20px;top:238.00px;width:8.42px;height:2.60px;background:#3fb7f2;border-radius:1.3px"></div>
<div class="t" style="left:707.20px;top:226.00px;height:14.20px;line-height:14.20px;font-size:7.1px;color:#1e1e1e;;transform:scaleX(0.93);transform-origin:0 50%">0.200</div>
<div style="left:706.90px;top:238.00px;width:5.19px;height:2.60px;background:#3fb7f2;border-radius:1.3px"></div>
<div class="t" style="left:448.50px;top:242.00px;height:14.60px;line-height:14.60px;font-size:7.3px;color:#222;;transform:scaleX(0.88);transform-origin:0 50%">13</div>
<div style="left:463.90px;top:242.00px;width:59.30px;height:14.00px;background:#a3a3a3"></div>
<div class="t" style="left:465.10px;top:242.00px;height:14.60px;line-height:14.60px;font-size:7.3px;color:#1a1a1a;;transform:scaleX(0.955);transform-origin:0 50%">Iris-setosa</div>
<div style="left:445.30px;top:256.00px;width:18.00px;height:1.00px;background:#e9eef6"></div>
<div style="left:463.90px;top:256.00px;width:59.30px;height:1.00px;background:#bdbdbd"></div>
<div style="left:523.60px;top:256.00px;width:241.10px;height:1.00px;background:#e0e0e0"></div>
<div class="t" style="left:526.00px;top:240.00px;height:14.20px;line-height:14.20px;font-size:7.1px;color:#1e1e1e;;transform:scaleX(0.93);transform-origin:0 50%">4.800</div>
<div style="left:525.70px;top:252.00px;width:10.29px;height:2.60px;background:#3fb7f2;border-radius:1.3px"></div>
<div class="t" style="left:585.90px;top:240.00px;height:14.20px;line-height:14.20px;font-size:7.1px;color:#1e1e1e;;transform:scaleX(0.93);transform-origin:0 50%">3.000</div>
<div style="left:585.60px;top:252.00px;width:25.17px;height:2.60px;background:#3fb7f2;border-radius:1.3px"></div>
<div class="t" style="left:646.50px;top:240.00px;height:14.20px;line-height:14.20px;font-size:7.1px;color:#1e1e1e;;transform:scaleX(0.93);transform-origin:0 50%">1.400</div>
<div style="left:646.20px;top:252.00px;width:6.61px;height:2.60px;background:#3fb7f2;border-radius:1.3px"></div>
<div class="t" style="left:707.20px;top:240.00px;height:14.20px;line-height:14.20px;font-size:7.1px;color:#1e1e1e;;transform:scaleX(0.93);transform-origin:0 50%">0.100</div>
<div class="t" style="left:448.50px;top:257.00px;height:14.60px;line-height:14.60px;font-size:7.3px;color:#222;;transform:scaleX(0.88);transform-origin:0 50%">14</div>
<div style="left:463.90px;top:257.00px;width:59.30px;height:13.00px;background:#a3a3a3"></div>
<div class="t" style="left:465.10px;top:257.00px;height:14.60px;line-height:14.60px;font-size:7.3px;color:#1a1a1a;;transform:scaleX(0.955);transform-origin:0 50%">Iris-setosa</div>
<div style="left:445.30px;top:270.00px;width:18.00px;height:1.00px;background:#e9eef6"></div>
<div style="left:463.90px;top:270.00px;width:59.30px;height:1.00px;background:#bdbdbd"></div>
<div style="left:523.60px;top:270.00px;width:241.10px;height:1.00px;background:#e0e0e0"></div>
<div class="t" style="left:526.00px;top:255.00px;height:14.20px;line-height:14.20px;font-size:7.1px;color:#1e1e1e;;transform:scaleX(0.93);transform-origin:0 50%">4.300</div>
<div class="t" style="left:585.90px;top:255.00px;height:14.20px;line-height:14.20px;font-size:7.1px;color:#1e1e1e;;transform:scaleX(0.93);transform-origin:0 50%">3.000</div>
<div style="left:585.60px;top:267.00px;width:25.17px;height:2.60px;background:#3fb7f2;border-radius:1.3px"></div>
<div class="t" style="left:646.50px;top:255.00px;height:14.20px;line-height:14.20px;font-size:7.1px;color:#1e1e1e;;transform:scaleX(0.93);transform-origin:0 50%">1.100</div>
<div style="left:646.20px;top:267.00px;width:3.90px;height:2.60px;background:#3fb7f2;border-radius:1.3px"></div>
<div class="t" style="left:707.20px;top:255.00px;height:14.20px;line-height:14.20px;font-size:7.1px;color:#1e1e1e;;transform:scaleX(0.93);transform-origin:0 50%">0.100</div>
<div class="t" style="left:448.50px;top:271.00px;height:14.60px;line-height:14.60px;font-size:7.3px;color:#222;;transform:scaleX(0.88);transform-origin:0 50%">15</div>
<div style="left:463.90px;top:271.00px;width:59.30px;height:14.00px;background:#a3a3a3"></div>
<div class="t" style="left:465.10px;top:271.00px;height:14.60px;line-height:14.60px;font-size:7.3px;color:#1a1a1a;;transform:scaleX(0.955);transform-origin:0 50%">Iris-setosa</div>
<div style="left:445.30px;top:285.00px;width:18.00px;height:1.00px;background:#e9eef6"></div>
<div style="left:463.90px;top:285.00px;width:59.30px;height:1.00px;background:#bdbdbd"></div>
<div style="left:523.60px;top:285.00px;width:241.10px;height:1.00px;background:#e0e0e0"></div>
<div class="t" style="left:526.00px;top:269.00px;height:14.20px;line-height:14.20px;font-size:7.1px;color:#1e1e1e;;transform:scaleX(0.93);transform-origin:0 50%">5.800</div>
<div style="left:525.70px;top:281.00px;width:24.88px;height:2.60px;background:#3fb7f2;border-radius:1.3px"></div>
<div class="t" style="left:585.90px;top:269.00px;height:14.20px;line-height:14.20px;font-size:7.1px;color:#1e1e1e;;transform:scaleX(0.93);transform-origin:0 50%">4.000</div>
<div style="left:585.60px;top:281.00px;width:47.33px;height:2.60px;background:#3fb7f2;border-radius:1.3px"></div>
<div class="t" style="left:646.50px;top:269.00px;height:14.20px;line-height:14.20px;font-size:7.1px;color:#1e1e1e;;transform:scaleX(0.93);transform-origin:0 50%">1.200</div>
<div style="left:646.20px;top:281.00px;width:4.81px;height:2.60px;background:#3fb7f2;border-radius:1.3px"></div>
<div class="t" style="left:707.20px;top:269.00px;height:14.20px;line-height:14.20px;font-size:7.1px;color:#1e1e1e;;transform:scaleX(0.93);transform-origin:0 50%">0.200</div>
<div style="left:706.90px;top:281.00px;width:5.19px;height:2.60px;background:#3fb7f2;border-radius:1.3px"></div>
<div class="t" style="left:448.50px;top:286.00px;height:14.60px;line-height:14.60px;font-size:7.3px;color:#222;;transform:scaleX(0.88);transform-origin:0 50%">16</div>
<div style="left:463.90px;top:286.00px;width:59.30px;height:13.00px;background:#a3a3a3"></div>
<div class="t" style="left:465.10px;top:286.00px;height:14.60px;line-height:14.60px;font-size:7.3px;color:#1a1a1a;;transform:scaleX(0.955);transform-origin:0 50%">Iris-setosa</div>
<div style="left:445.30px;top:299.00px;width:18.00px;height:1.00px;background:#e9eef6"></div>
<div style="left:463.90px;top:299.00px;width:59.30px;height:1.00px;background:#bdbdbd"></div>
<div style="left:523.60px;top:299.00px;width:241.10px;height:1.00px;background:#e0e0e0"></div>
<div class="t" style="left:526.00px;top:284.00px;height:14.20px;line-height:14.20px;font-size:7.1px;color:#1e1e1e;;transform:scaleX(0.93);transform-origin:0 50%">5.700</div>
<div style="left:525.70px;top:296.00px;width:23.42px;height:2.60px;background:#3fb7f2;border-radius:1.3px"></div>
<div class="t" style="left:585.90px;top:284.00px;height:14.20px;line-height:14.20px;font-size:7.1px;color:#1e1e1e;;transform:scaleX(0.93);transform-origin:0 50%">4.400</div>
<div style="left:585.60px;top:296.00px;width:56.20px;height:2.60px;background:#3fb7f2;border-radius:1.3px"></div>
<div class="t" style="left:646.50px;top:284.00px;height:14.20px;line-height:14.20px;font-size:7.1px;color:#1e1e1e;;transform:scaleX(0.93);transform-origin:0 50%">1.500</div>
<div style="left:646.20px;top:296.00px;width:7.52px;height:2.60px;background:#3fb7f2;border-radius:1.3px"></div>
<div class="t" style="left:707.20px;top:284.00px;height:14.20px;line-height:14.20px;font-size:7.1px;color:#1e1e1e;;transform:scaleX(0.93);transform-origin:0 50%">0.400</div>
<div style="left:706.90px;top:296.00px;width:9.56px;height:2.60px;background:#3fb7f2;border-radius:1.3px"></div>
<div class="t" style="left:448.50px;top:300.00px;height:14.60px;line-height:14.60px;font-size:7.3px;color:#222;;transform:scaleX(0.88);transform-origin:0 50%">17</div>
<div style="left:463.90px;top:300.00px;width:59.30px;height:14.00px;background:#a3a3a3"></div>
<div class="t" style="left:465.10px;top:300.00px;height:14.60px;line-height:14.60px;font-size:7.3px;color:#1a1a1a;;transform:scaleX(0.955);transform-origin:0 50%">Iris-setosa</div>
<div style="left:445.30px;top:314.00px;width:18.00px;height:1.00px;background:#e9eef6"></div>
<div style="left:463.90px;top:314.00px;width:59.30px;height:1.00px;background:#bdbdbd"></div>
<div style="left:523.60px;top:314.00px;width:241.10px;height:1.00px;background:#e0e0e0"></div>
<div class="t" style="left:526.00px;top:298.00px;height:14.20px;line-height:14.20px;font-size:7.1px;color:#1e1e1e;;transform:scaleX(0.93);transform-origin:0 50%">5.400</div>
<div style="left:525.70px;top:310.00px;width:19.04px;height:2.60px;background:#3fb7f2;border-radius:1.3px"></div>
<div class="t" style="left:585.90px;top:298.00px;height:14.20px;line-height:14.20px;font-size:7.1px;color:#1e1e1e;;transform:scaleX(0.93);transform-origin:0 50%">3.900</div>
<div style="left:585.60px;top:310.00px;width:45.12px;height:2.60px;background:#3fb7f2;border-radius:1.3px"></div>
<div class="t" style="left:646.50px;top:298.00px;height:14.20px;line-height:14.20px;font-size:7.1px;color:#1e1e1e;;transform:scaleX(0.93);transform-origin:0 50%">1.300</div>
<div style="left:646.20px;top:310.00px;width:5.71px;height:2.60px;background:#3fb7f2;border-radius:1.3px"></div>
<div class="t" style="left:707.20px;top:298.00px;height:14.20px;line-height:14.20px;font-size:7.1px;color:#1e1e1e;;transform:scaleX(0.93);transform-origin:0 50%">0.400</div>
<div style="left:706.90px;top:310.00px;width:9.56px;height:2.60px;background:#3fb7f2;border-radius:1.3px"></div>
<div class="t" style="left:448.50px;top:315.00px;height:14.60px;line-height:14.60px;font-size:7.3px;color:#222;;transform:scaleX(0.88);transform-origin:0 50%">18</div>
<div style="left:463.90px;top:315.00px;width:59.30px;height:13.00px;background:#a3a3a3"></div>
<div class="t" style="left:465.10px;top:315.00px;height:14.60px;line-height:14.60px;font-size:7.3px;color:#1a1a1a;;transform:scaleX(0.955);transform-origin:0 50%">Iris-setosa</div>
<div style="left:445.30px;top:328.00px;width:18.00px;height:1.00px;background:#e9eef6"></div>
<div style="left:463.90px;top:328.00px;width:59.30px;height:1.00px;background:#bdbdbd"></div>
<div style="left:523.60px;top:328.00px;width:241.10px;height:1.00px;background:#e0e0e0"></div>
<div class="t" style="left:526.00px;top:313.00px;height:14.20px;line-height:14.20px;font-size:7.1px;color:#1e1e1e;;transform:scaleX(0.93);transform-origin:0 50%">5.100</div>
<div style="left:525.70px;top:325.00px;width:14.67px;height:2.60px;background:#3fb7f2;border-radius:1.3px"></div>
<div class="t" style="left:585.90px;top:313.00px;height:14.20px;line-height:14.20px;font-size:7.1px;color:#1e1e1e;;transform:scaleX(0.93);transform-origin:0 50%">3.500</div>
<div style="left:585.60px;top:325.00px;width:36.25px;height:2.60px;background:#3fb7f2;border-radius:1.3px"></div>
<div class="t" style="left:646.50px;top:313.00px;height:14.20px;line-height:14.20px;font-size:7.1px;color:#1e1e1e;;transform:scaleX(0.93);transform-origin:0 50%">1.400</div>
<div style="left:646.20px;top:325.00px;width:6.61px;height:2.60px;background:#3fb7f2;border-radius:1.3px"></div>
<div class="t" style="left:707.20px;top:313.00px;height:14.20px;line-height:14.20px;font-size:7.1px;color:#1e1e1e;;transform:scaleX(0.93);transform-origin:0 50%">0.300</div>
<div style="left:706.90px;top:325.00px;width:7.38px;height:2.60px;background:#3fb7f2;border-radius:1.3px"></div>
<div class="t" style="left:448.50px;top:329.00px;height:14.60px;line-height:14.60px;font-size:7.3px;color:#222;;transform:scaleX(0.88);transform-origin:0 50%">19</div>
<div style="left:463.90px;top:329.00px;width:59.30px;height:14.00px;background:#a3a3a3"></div>
<div class="t" style="left:465.10px;top:329.00px;height:14.60px;line-height:14.60px;font-size:7.3px;color:#1a1a1a;;transform:scaleX(0.955);transform-origin:0 50%">Iris-setosa</div>
<div style="left:445.30px;top:343.00px;width:18.00px;height:1.00px;background:#e9eef6"></div>
<div style="left:463.90px;top:343.00px;width:59.30px;height:1.00px;background:#bdbdbd"></div>
<div style="left:523.60px;top:343.00px;width:241.10px;height:1.00px;background:#e0e0e0"></div>
<div class="t" style="left:526.00px;top:327.00px;height:14.20px;line-height:14.20px;font-size:7.1px;color:#1e1e1e;;transform:scaleX(0.93);transform-origin:0 50%">5.700</div>
<div style="left:525.70px;top:339.00px;width:23.42px;height:2.60px;background:#3fb7f2;border-radius:1.3px"></div>
<div class="t" style="left:585.90px;top:327.00px;height:14.20px;line-height:14.20px;font-size:7.1px;color:#1e1e1e;;transform:scaleX(0.93);transform-origin:0 50%">3.800</div>
<div style="left:585.60px;top:339.00px;width:42.90px;height:2.60px;background:#3fb7f2;border-radius:1.3px"></div>
<div class="t" style="left:646.50px;top:327.00px;height:14.20px;line-height:14.20px;font-size:7.1px;color:#1e1e1e;;transform:scaleX(0.93);transform-origin:0 50%">1.700</div>
<div style="left:646.20px;top:339.00px;width:9.32px;height:2.60px;background:#3fb7f2;border-radius:1.3px"></div>
<div class="t" style="left:707.20px;top:327.00px;height:14.20px;line-height:14.20px;font-size:7.1px;color:#1e1e1e;;transform:scaleX(0.93);transform-origin:0 50%">0.300</div>
<div style="left:706.90px;top:339.00px;width:7.38px;height:2.60px;background:#3fb7f2;border-radius:1.3px"></div>
<div class="t" style="left:448.50px;top:344.00px;height:14.60px;line-height:14.60px;font-size:7.3px;color:#222;;transform:scaleX(0.88);transform-origin:0 50%">20</div>
<div style="left:463.90px;top:344.00px;width:59.30px;height:-0.30px;background:#a3a3a3"></div>
<div class="t" style="left:465.10px;top:344.00px;height:14.60px;line-height:14.60px;font-size:7.3px;color:#1a1a1a;;transform:scaleX(0.955);transform-origin:0 50%">Iris-setosa</div>
<div style="left:445.30px;top:357.00px;width:18.00px;height:1.00px;background:#e9eef6"></div>
<div style="left:463.90px;top:357.00px;width:59.30px;height:1.00px;background:#bdbdbd"></div>
<div style="left:523.60px;top:357.00px;width:241.10px;height:1.00px;background:#e0e0e0"></div>
<div class="t" style="left:526.00px;top:342.00px;height:14.20px;line-height:14.20px;font-size:7.1px;color:#1e1e1e;;transform:scaleX(0.93);transform-origin:0 50%">5.100</div>
<div style="left:525.70px;top:354.00px;width:14.67px;height:2.60px;background:#3fb7f2;border-radius:1.3px"></div>
<div class="t" style="left:585.90px;top:342.00px;height:14.20px;line-height:14.20px;font-size:7.1px;color:#1e1e1e;;transform:scaleX(0.93);transform-origin:0 50%">3.800</div>
<div style="left:585.60px;top:354.00px;width:42.90px;height:2.60px;background:#3fb7f2;border-radius:1.3px"></div>
<div class="t" style="left:646.50px;top:342.00px;height:14.20px;line-height:14.20px;font-size:7.1px;color:#1e1e1e;;transform:scaleX(0.93);transform-origin:0 50%">1.500</div>
<div style="left:646.20px;top:354.00px;width:7.52px;height:2.60px;background:#3fb7f2;border-radius:1.3px"></div>
<div class="t" style="left:707.20px;top:342.00px;height:14.20px;line-height:14.20px;font-size:7.1px;color:#1e1e1e;;transform:scaleX(0.93);transform-origin:0 50%">0.300</div>
<div style="left:706.90px;top:354.00px;width:7.38px;height:2.60px;background:#3fb7f2;border-radius:1.3px"></div>
<div style="left:523.10px;top:67.50px;width:1.00px;height:276.20px;background:#e0e0e0"></div>
<div style="left:583.00px;top:67.50px;width:1.00px;height:276.20px;background:#e0e0e0"></div>
<div style="left:643.60px;top:67.50px;width:1.00px;height:276.20px;background:#e0e0e0"></div>
<div style="left:704.30px;top:67.50px;width:1.00px;height:276.20px;background:#e0e0e0"></div>
<div style="left:764.20px;top:67.50px;width:1.00px;height:276.20px;background:#e0e0e0"></div>
<div style="left:777.40px;top:52.70px;width:10.80px;height:291.00px;background:#f0f0f0"></div>
<div style="left:777.70px;top:64.40px;width:10.20px;height:32.80px;background:#cdcdcd"></div>
<svg class="a" style="left:779.80px;top:56.50px" width="6" height="5" viewBox="0 0 6 5"><path d="M0.7 3.6L3 1.3L5.3 3.6" stroke="#505050" stroke-width="1.2" fill="none"/></svg>
<svg class="a" style="left:779.80px;top:335.60px" width="6" height="5" viewBox="0 0 6 5"><path d="M0.7 1.3L3 3.6L5.3 1.3" stroke="#505050" stroke-width="1.2" fill="none"/></svg>
</div></div>
<div style="left:444.30px;top:51.70px;width:344.90px;height:293.00px;border:1px solid #b9bdc4;border-right-color:#d4d7db;border-bottom-color:#d4d7db;box-sizing:border-box"></div>
</div></div>
<div class="win" style="left:52.20px;top:220.20px;width:357.60px;height:324.20px;background:#ebebeb;z-index:3"><div class="g" style="left:-52.20px;top:-220.20px">
<svg class="a" style="left:59.10px;top:225.30px" width="7.20" height="7.70" viewBox="0 0 8 8"><rect x="0.3" y="0.3" width="7.4" height="7.4" fill="#fbfbfb" stroke="#6a6a6a" stroke-width="0.6"/><rect x="0" y="0" width="8" height="1.5" fill="#2a2a2a"/><path d="M2.8 1.5V7.7M5.2 1.5V7.7M0.3 3.7H7.7M0.3 5.7H7.7" stroke="#c8c8c8" stroke-width="0.5"/></svg>
<div class="t ti" style="left:171.00px;width:120.00px;text-align:center;top:219.80px;height:19.60px;line-height:19.60px;font-size:9.8px;color:#222;;transform:scaleX(0.925);transform-origin:50% 50%">Data Table (1)</div>
<div style="left:378.80px;top:221.10px;width:26.70px;height:11.70px;background:#bcbcbc"></div>
<svg class="a" style="left:389.15px;top:224.10px" width="6" height="6" viewBox="0 0 6 6"><path d="M0.8 0.8L5.2 5.2M5.2 0.8L0.8 5.2" stroke="#fff" stroke-width="1.2" fill="none"/></svg>
<div style="left:367.50px;top:224.50px;width:6.20px;height:4.90px;border:0.8px solid #2a2a2a;border-top-width:1.7px;box-sizing:border-box"></div>
<div style="left:351.70px;top:227.70px;width:5.10px;height:1.50px;background:#2a2a2a"></div>
<div style="left:56.80px;top:238.40px;width:349.20px;height:302.30px;background:#f0f0f0"></div>
<div style="left:58.80px;top:244.20px;width:119.60px;height:59.20px;border:1px solid #e4e4e4;box-sizing:border-box;border-radius:1.5px;box-shadow:inset 0.6px 0.6px 0 rgba(255,255,255,0.7)"></div>
<div style="left:63.90px;top:243.70px;width:14.84px;height:2.50px;background:#f0f0f0"></div>
<div class="t" style="left:65.90px;top:238.20px;height:13.00px;line-height:13.00px;font-size:6.5px;color:#1a1a1a;">Info</div>
<div class="t" style="left:63.50px;top:250.70px;height:13.00px;line-height:13.00px;font-size:6.5px;color:#1a1a1a;">150 instances (no missing values)</div>
<div class="t" style="left:63.10px;top:261.00px;height:13.00px;line-height:13.00px;font-size:6.5px;color:#1a1a1a;">2 features (no missing values)</div>
<div class="t" style="left:62.70px;top:271.00px;height:13.00px;line-height:13.00px;font-size:6.5px;color:#1a1a1a;">Discrete class with 3 values (no</div>
<div class="t" style="left:62.70px;top:279.00px;height:13.00px;line-height:13.00px;font-size:6.5px;color:#1a1a1a;">missing values)</div>
<div class="t" style="left:62.70px;top:288.90px;height:13.00px;line-height:13.00px;font-size:6.5px;color:#1a1a1a;">No meta attributes</div>
<div style="left:58.80px;top:320.40px;width:119.60px;height:47.60px;border:1px solid #e4e4e4;box-sizing:border-box;border-radius:1.5px;box-shadow:inset 0.6px 0.6px 0 rgba(255,255,255,0.7)"></div>
<div style="left:63.90px;top:319.90px;width:30.61px;height:2.50px;background:#f0f0f0"></div>
<div class="t" style="left:65.90px;top:314.40px;height:13.00px;line-height:13.00px;font-size:6.5px;color:#1a1a1a;">Variables</div>
<div style="left:63.20px;top:330.40px;width:7.60px;height:7.60px;background:#fff;border:0.8px solid #8a8a8a;box-sizing:border-box;border-radius:0.5px"></div>
<svg class="a" style="left:63.20px;top:330.40px" width="7.6" height="7.6" viewBox="0 0 8 8"><path d="M1.6 4.1L3.3 6L6.5 1.9" stroke="#111" stroke-width="1.4" fill="none"/></svg>
<div class="t" style="left:73.90px;top:327.70px;height:13.00px;line-height:13.00px;font-size:6.5px;color:#1a1a1a;">Show variable labels (if present)</div>
<div style="left:63.20px;top:342.60px;width:7.60px;height:7.60px;background:#fff;border:0.8px solid #8a8a8a;box-sizing:border-box;border-radius:0.5px"></div>
<svg class="a" style="left:63.20px;top:342.60px" width="7.6" height="7.6" viewBox="0 0 8 8"><path d="M1.6 4.1L3.3 6L6.5 1.9" stroke="#111" stroke-width="1.4" fill="none"/></svg>
<div class="t" style="left:73.90px;top:340.40px;height:13.00px;line-height:13.00px;font-size:6.5px;color:#1a1a1a;">Visualize continuous values</div>
<div style="left:63.20px;top:355.20px;width:7.60px;height:7.60px;background:#fff;border:0.8px solid #8a8a8a;box-sizing:border-box;border-radius:0.5px"></div>
<svg class="a" style="left:63.20px;top:355.20px" width="7.6" height="7.6" viewBox="0 0 8 8"><path d="M1.6 4.1L3.3 6L6.5 1.9" stroke="#111" stroke-width="1.4" fill="none"/></svg>
<div class="t" style="left:73.90px;top:353.00px;height:13.00px;line-height:13.00px;font-size:6.5px;color:#1a1a1a;">Color by instance classes</div>
<div style="left:58.80px;top:380.70px;width:119.60px;height:22.90px;border:1px solid #e4e4e4;box-sizing:border-box;border-radius:1.5px;box-shadow:inset 0.6px 0.6px 0 rgba(255,255,255,0.7)"></div>
<div style="left:63.90px;top:380.20px;width:30.74px;height:2.50px;background:#f0f0f0"></div>
<div class="t" style="left:65.90px;top:374.70px;height:13.00px;line-height:13.00px;font-size:6.5px;color:#1a1a1a;">Selection</div>
<div style="left:63.20px;top:390.50px;width:7.60px;height:7.60px;background:#fff;border:0.8px solid #8a8a8a;box-sizing:border-box;border-radius:0.5px"></div>
<svg class="a" style="left:63.20px;top:390.50px" width="7.6" height="7.6" viewBox="0 0 8 8"><path d="M1.6 4.1L3.3 6L6.5 1.9" stroke="#111" stroke-width="1.4" fill="none"/></svg>
<div class="t" style="left:73.90px;top:387.80px;height:13.00px;line-height:13.00px;font-size:6.5px;color:#1a1a1a;">Select full rows</div>
<div style="left:58.80px;top:477.70px;width:119.60px;height:12.30px;background:linear-gradient(#f0f0f0,#e3e3e3);border:1px solid #b9b9b9;box-sizing:border-box;border-radius:1px"></div>
<div class="t" style="left:58.80px;width:119.60px;text-align:center;top:477.85px;height:13.00px;line-height:13.00px;font-size:6.5px;color:#1a1a1a;">Restore Original Order</div>
<div style="left:58.80px;top:496.90px;width:119.60px;height:12.30px;background:linear-gradient(#f0f0f0,#e3e3e3);border:1px solid #b9b9b9;box-sizing:border-box;border-radius:1px"></div>
<div class="t" style="left:58.80px;width:119.60px;text-align:center;top:497.05px;height:13.00px;line-height:13.00px;font-size:6.5px;color:#1a1a1a;">Report</div>
<div style="left:58.00px;top:515.80px;width:120.60px;height:22.90px;border:1px solid #e0e0e0;box-sizing:border-box"></div>
<div style="left:63.00px;top:523.40px;width:7.60px;height:7.60px;background:#fff;border:0.8px solid #8a8a8a;box-sizing:border-box;border-radius:0.5px"></div>
<svg class="a" style="left:63.00px;top:523.40px" width="7.6" height="7.6" viewBox="0 0 8 8"><path d="M1.6 4.1L3.3 6L6.5 1.9" stroke="#111" stroke-width="1.4" fill="none"/></svg>
<div style="left:80.20px;top:521.40px;width:93.40px;height:12.00px;background:#f4f4f4;border:1px solid #dadada;box-sizing:border-box;border-radius:1px"></div>
<div class="t" style="left:80.20px;width:93.40px;text-align:center;top:521.40px;height:13.00px;line-height:13.00px;font-size:6.5px;color:#9a9a9a;">Send Automatically</div>
<div style="left:184.00px;top:244.10px;width:214.90px;height:289.60px;background:#fff;overflow:hidden"><div class="g" style="left:-184.00px;top:-244.10px">
<div style="left:184.00px;top:244.10px;width:204.40px;height:14.20px;background:#f9fbfd"></div>
<div style="left:184.00px;top:258.00px;width:204.40px;height:1.00px;background:#dce6f2"></div>
<div class="t" style="left:200.50px;width:60.80px;text-align:center;top:244.60px;height:14.80px;line-height:14.80px;font-size:7.4px;color:#222;;transform:scaleX(0.99);transform-origin:50% 50%">iris</div>
<div style="left:260.80px;top:244.10px;width:1.00px;height:14.20px;background:#dfe8f3"></div>
<div class="t" style="left:261.30px;width:60.30px;text-align:center;top:244.60px;height:14.80px;line-height:14.80px;font-size:7.4px;color:#222;;transform:scaleX(0.99);transform-origin:50% 50%">petal length</div>
<div style="left:321.10px;top:244.10px;width:1.00px;height:14.20px;background:#dfe8f3"></div>
<div class="t" style="left:321.60px;width:59.90px;text-align:center;top:244.60px;height:14.80px;line-height:14.80px;font-size:7.4px;color:#222;;transform:scaleX(0.99);transform-origin:50% 50%">petal width</div>
<div style="left:381.00px;top:244.10px;width:1.00px;height:14.20px;background:#dfe8f3"></div>
<div style="left:200.00px;top:244.10px;width:1.00px;height:14.20px;background:#dfe8f3"></div>
<div class="t" style="left:187.20px;top:259.00px;height:14.60px;line-height:14.60px;font-size:7.3px;color:#222;;transform:scaleX(0.88);transform-origin:0 50%">1</div>
<div style="left:201.10px;top:259.00px;width:59.80px;height:13.00px;background:#a3a3a3"></div>
<div class="t" style="left:202.30px;top:259.00px;height:14.60px;line-height:14.60px;font-size:7.3px;color:#1a1a1a;;transform:scaleX(0.955);transform-origin:0 50%">Iris-setosa</div>
<div style="left:184.00px;top:272.00px;width:16.50px;height:1.00px;background:#e9eef6"></div>
<div style="left:201.10px;top:272.00px;width:59.80px;height:1.00px;background:#bdbdbd"></div>
<div style="left:261.30px;top:272.00px;width:120.20px;height:1.00px;background:#e0e0e0"></div>
<div class="t" style="left:263.70px;top:257.00px;height:14.20px;line-height:14.20px;font-size:7.1px;color:#1e1e1e;;transform:scaleX(0.93);transform-origin:0 50%">1.400</div>
<div style="left:263.40px;top:269.00px;width:6.59px;height:2.60px;background:#3fb7f2;border-radius:1.3px"></div>
<div class="t" style="left:324.00px;top:257.00px;height:14.20px;line-height:14.20px;font-size:7.1px;color:#1e1e1e;;transform:scaleX(0.93);transform-origin:0 50%">0.200</div>
<div style="left:323.70px;top:269.00px;width:5.19px;height:2.60px;background:#3fb7f2;border-radius:1.3px"></div>
<div class="t" style="left:187.20px;top:273.00px;height:14.60px;line-height:14.60px;font-size:7.3px;color:#222;;transform:scaleX(0.88);transform-origin:0 50%">2</div>
<div style="left:201.10px;top:273.00px;width:59.80px;height:14.00px;background:#a3a3a3"></div>
<div class="t" style="left:202.30px;top:273.00px;height:14.60px;line-height:14.60px;font-size:7.3px;color:#1a1a1a;;transform:scaleX(0.955);transform-origin:0 50%">Iris-setosa</div>
<div style="left:184.00px;top:287.00px;width:16.50px;height:1.00px;background:#e9eef6"></div>
<div style="left:201.10px;top:287.00px;width:59.80px;height:1.00px;background:#bdbdbd"></div>
<div style="left:261.30px;top:287.00px;width:120.20px;height:1.00px;background:#e0e0e0"></div>
<div class="t" style="left:263.70px;top:271.00px;height:14.20px;line-height:14.20px;font-size:7.1px;color:#1e1e1e;;transform:scaleX(0.93);transform-origin:0 50%">1.400</div>
<div style="left:263.40px;top:283.00px;width:6.59px;height:2.60px;background:#3fb7f2;border-radius:1.3px"></div>
<div class="t" style="left:324.00px;top:271.00px;height:14.20px;line-height:14.20px;font-size:7.1px;color:#1e1e1e;;transform:scaleX(0.93);transform-origin:0 50%">0.200</div>
<div style="left:323.70px;top:283.00px;width:5.19px;height:2.60px;background:#3fb7f2;border-radius:1.3px"></div>
<div class="t" style="left:187.20px;top:288.00px;height:14.60px;line-height:14.60px;font-size:7.3px;color:#222;;transform:scaleX(0.88);transform-origin:0 50%">3</div>
<div style="left:201.10px;top:288.00px;width:59.80px;height:13.00px;background:#a3a3a3"></div>
<div class="t" style="left:202.30px;top:288.00px;height:14.60px;line-height:14.60px;font-size:7.3px;color:#1a1a1a;;transform:scaleX(0.955);transform-origin:0 50%">Iris-setosa</div>
<div style="left:184.00px;top:301.00px;width:16.50px;height:1.00px;background:#e9eef6"></div>
<div style="left:201.10px;top:301.00px;width:59.80px;height:1.00px;background:#bdbdbd"></div>
<div style="left:261.30px;top:301.00px;width:120.20px;height:1.00px;background:#e0e0e0"></div>
<div class="t" style="left:263.70px;top:286.00px;height:14.20px;line-height:14.20px;font-size:7.1px;color:#1e1e1e;;transform:scaleX(0.93);transform-origin:0 50%">1.300</div>
<div style="left:263.40px;top:298.00px;width:5.69px;height:2.60px;background:#3fb7f2;border-radius:1.3px"></div>
<div class="t" style="left:324.00px;top:286.00px;height:14.20px;line-height:14.20px;font-size:7.1px;color:#1e1e1e;;transform:scaleX(0.93);transform-origin:0 50%">0.200</div>
<div style="left:323.70px;top:298.00px;width:5.19px;height:2.60px;background:#3fb7f2;border-radius:1.3px"></div>
<div class="t" style="left:187.20px;top:302.00px;height:14.60px;line-height:14.60px;font-size:7.3px;color:#222;;transform:scaleX(0.88);transform-origin:0 50%">4</div>
<div style="left:201.10px;top:302.00px;width:59.80px;height:14.00px;background:#a3a3a3"></div>
<div class="t" style="left:202.30px;top:302.00px;height:14.60px;line-height:14.60px;font-size:7.3px;color:#1a1a1a;;transform:scaleX(0.955);transform-origin:0 50%">Iris-setosa</div>
<div style="left:184.00px;top:316.00px;width:16.50px;height:1.00px;background:#e9eef6"></div>
<div style="left:201.10px;top:316.00px;width:59.80px;height:1.00px;background:#bdbdbd"></div>
<div style="left:261.30px;top:316.00px;width:120.20px;height:1.00px;background:#e0e0e0"></div>
<div class="t" style="left:263.70px;top:300.00px;height:14.20px;line-height:14.20px;font-size:7.1px;color:#1e1e1e;;transform:scaleX(0.93);transform-origin:0 50%">1.500</div>
<div style="left:263.40px;top:312.00px;width:7.48px;height:2.60px;background:#3fb7f2;border-radius:1.3px"></div>
<div class="t" style="left:324.00px;top:300.00px;height:14.20px;line-height:14.20px;font-size:7.1px;color:#1e1e1e;;transform:scaleX(0.93);transform-origin:0 50%">0.200</div>
<div style="left:323.70px;top:312.00px;width:5.19px;height:2.60px;background:#3fb7f2;border-radius:1.3px"></div>
<div class="t" style="left:187.20px;top:317.00px;height:14.60px;line-height:14.60px;font-size:7.3px;color:#222;;transform:scaleX(0.88);transform-origin:0 50%">5</div>
<div style="left:201.10px;top:317.00px;width:59.80px;height:13.00px;background:#a3a3a3"></div>
<div class="t" style="left:202.30px;top:317.00px;height:14.60px;line-height:14.60px;font-size:7.3px;color:#1a1a1a;;transform:scaleX(0.955);transform-origin:0 50%">Iris-setosa</div>
<div style="left:184.00px;top:330.00px;width:16.50px;height:1.00px;background:#e9eef6"></div>
<div style="left:201.10px;top:330.00px;width:59.80px;height:1.00px;background:#bdbdbd"></div>
<div style="left:261.30px;top:330.00px;width:120.20px;height:1.00px;background:#e0e0e0"></div>
<div class="t" style="left:263.70px;top:315.00px;height:14.20px;line-height:14.20px;font-size:7.1px;color:#1e1e1e;;transform:scaleX(0.93);transform-origin:0 50%">1.400</div>
<div style="left:263.40px;top:327.00px;width:6.59px;height:2.60px;background:#3fb7f2;border-radius:1.3px"></div>
<div class="t" style="left:324.00px;top:315.00px;height:14.20px;line-height:14.20px;font-size:7.1px;color:#1e1e1e;;transform:scaleX(0.93);transform-origin:0 50%">0.200</div>
<div style="left:323.70px;top:327.00px;width:5.19px;height:2.60px;background:#3fb7f2;border-radius:1.3px"></div>
<div class="t" style="left:187.20px;top:331.00px;height:14.60px;line-height:14.60px;font-size:7.3px;color:#222;;transform:scaleX(0.88);transform-origin:0 50%">6</div>
<div style="left:201.10px;top:331.00px;width:59.80px;height:14.00px;background:#a3a3a3"></div>
<div class="t" style="left:202.30px;top:331.00px;height:14.60px;line-height:14.60px;font-size:7.3px;color:#1a1a1a;;transform:scaleX(0.955);transform-origin:0 50%">Iris-setosa</div>
<div style="left:184.00px;top:345.00px;width:16.50px;height:1.00px;background:#e9eef6"></div>
<div style="left:201.10px;top:345.00px;width:59.80px;height:1.00px;background:#bdbdbd"></div>
<div style="left:261.30px;top:345.00px;width:120.20px;height:1.00px;background:#e0e0e0"></div>
<div class="t" style="left:263.70px;top:329.00px;height:14.20px;line-height:14.20px;font-size:7.1px;color:#1e1e1e;;transform:scaleX(0.93);transform-origin:0 50%">1.700</div>
<div style="left:263.40px;top:341.00px;width:9.28px;height:2.60px;background:#3fb7f2;border-radius:1.3px"></div>
<div class="t" style="left:324.00px;top:329.00px;height:14.20px;line-height:14.20px;font-size:7.1px;color:#1e1e1e;;transform:scaleX(0.93);transform-origin:0 50%">0.400</div>
<div style="left:323.70px;top:341.00px;width:9.56px;height:2.60px;background:#3fb7f2;border-radius:1.3px"></div>
<div class="t" style="left:187.20px;top:346.00px;height:14.60px;line-height:14.60px;font-size:7.3px;color:#222;;transform:scaleX(0.88);transform-origin:0 50%">7</div>
<div style="left:201.10px;top:346.00px;width:59.80px;height:13.00px;background:#a3a3a3"></div>
<div class="t" style="left:202.30px;top:346.00px;height:14.60px;line-height:14.60px;font-size:7.3px;color:#1a1a1a;;transform:scaleX(0.955);transform-origin:0 50%">Iris-setosa</div>
<div style="left:184.00px;top:359.00px;width:16.50px;height:1.00px;background:#e9eef6"></div>
<div style="left:201.10px;top:359.00px;width:59.80px;height:1.00px;background:#bdbdbd"></div>
<div style="left:261.30px;top:359.00px;width:120.20px;height:1.00px;background:#e0e0e0"></div>
<div class="t" style="left:263.70px;top:344.00px;height:14.20px;line-height:14.20px;font-size:7.1px;color:#1e1e1e;;transform:scaleX(0.93);transform-origin:0 50%">1.400</div>
<div style="left:263.40px;top:356.00px;width:6.59px;height:2.60px;background:#3fb7f2;border-radius:1.3px"></div>
<div class="t" style="left:324.00px;top:344.00px;height:14.20px;line-height:14.20px;font-size:7.1px;color:#1e1e1e;;transform:scaleX(0.93);transform-origin:0 50%">0.300</div>
<div style="left:323.70px;top:356.00px;width:7.38px;height:2.60px;background:#3fb7f2;border-radius:1.3px"></div>
<div class="t" style="left:187.20px;top:360.00px;height:14.60px;line-height:14.60px;font-size:7.3px;color:#222;;transform:scaleX(0.88);transform-origin:0 50%">8</div>
<div style="left:201.10px;top:360.00px;width:59.80px;height:14.00px;background:#a3a3a3"></div>
<div class="t" style="left:202.30px;top:360.00px;height:14.60px;line-height:14.60px;font-size:7.3px;color:#1a1a1a;;transform:scaleX(0.955);transform-origin:0 50%">Iris-setosa</div>
<div style="left:184.00px;top:374.00px;width:16.50px;height:1.00px;background:#e9eef6"></div>
<div style="left:201.10px;top:374.00px;width:59.80px;height:1.00px;background:#bdbdbd"></div>
<div style="left:261.30px;top:374.00px;width:120.20px;height:1.00px;background:#e0e0e0"></div>
<div class="t" style="left:263.70px;top:358.00px;height:14.20px;line-height:14.20px;font-size:7.1px;color:#1e1e1e;;transform:scaleX(0.93);transform-origin:0 50%">1.500</div>
<div style="left:263.40px;top:370.00px;width:7.48px;height:2.60px;background:#3fb7f2;border-radius:1.3px"></div>
<div class="t" style="left:324.00px;top:358.00px;height:14.20px;line-height:14.20px;font-size:7.1px;color:#1e1e1e;;transform:scaleX(0.93);transform-origin:0 50%">0.200</div>
<div style="left:323.70px;top:370.00px;width:5.19px;height:2.60px;background:#3fb7f2;border-radius:1.3px"></div>
<div class="t" style="left:187.20px;top:375.00px;height:14.60px;line-height:14.60px;font-size:7.3px;color:#222;;transform:scaleX(0.88);transform-origin:0 50%">9</div>
<div style="left:201.10px;top:375.00px;width:59.80px;height:13.00px;background:#a3a3a3"></div>
<div class="t" style="left:202.30px;top:375.00px;height:14.60px;line-height:14.60px;font-size:7.3px;color:#1a1a1a;;transform:scaleX(0.955);transform-origin:0 50%">Iris-setosa</div>
<div style="left:184.00px;top:388.00px;width:16.50px;height:1.00px;background:#e9eef6"></div>
<div style="left:201.10px;top:388.00px;width:59.80px;height:1.00px;background:#bdbdbd"></div>
<div style="left:261.30px;top:388.00px;width:120.20px;height:1.00px;background:#e0e0e0"></div>
<div class="t" style="left:263.70px;top:373.00px;height:14.20px;line-height:14.20px;font-size:7.1px;color:#1e1e1e;;transform:scaleX(0.93);transform-origin:0 50%">1.400</div>
<div style="left:263.40px;top:385.00px;width:6.59px;height:2.60px;background:#3fb7f2;border-radius:1.3px"></div>
<div class="t" style="left:324.00px;top:373.00px;height:14.20px;line-height:14.20px;font-size:7.1px;color:#1e1e1e;;transform:scaleX(0.93);transform-origin:0 50%">0.200</div>
<div style="left:323.70px;top:385.00px;width:5.19px;height:2.60px;background:#3fb7f2;border-radius:1.3px"></div>
<div class="t" style="left:187.20px;top:389.00px;height:14.60px;line-height:14.60px;font-size:7.3px;color:#222;;transform:scaleX(0.88);transform-origin:0 50%">10</div>
<div style="left:201.10px;top:389.00px;width:59.80px;height:14.00px;background:#a3a3a3"></div>
<div class="t" style="left:202.30px;top:389.00px;height:14.60px;line-height:14.60px;font-size:7.3px;color:#1a1a1a;;transform:scaleX(0.955);transform-origin:0 50%">Iris-setosa</div>
<div style="left:184.00px;top:403.00px;width:16.50px;height:1.00px;background:#e9eef6"></div>
<div style="left:201.10px;top:403.00px;width:59.80px;height:1.00px;background:#bdbdbd"></div>
<div style="left:261.30px;top:403.00px;width:120.20px;height:1.00px;background:#e0e0e0"></div>
<div class="t" style="left:263.70px;top:387.00px;height:14.20px;line-height:14.20px;font-size:7.1px;color:#1e1e1e;;transform:scaleX(0.93);transform-origin:0 50%">1.500</div>
<div style="left:263.40px;top:399.00px;width:7.48px;height:2.60px;background:#3fb7f2;border-radius:1.3px"></div>
<div class="t" style="left:324.00px;top:387.00px;height:14.20px;line-height:14.20px;font-size:7.1px;color:#1e1e1e;;transform:scaleX(0.93);transform-origin:0 50%">0.100</div>
<div class="t" style="left:187.20px;top:404.00px;height:14.60px;line-height:14.60px;font-size:7.3px;color:#222;;transform:scaleX(0.88);transform-origin:0 50%">11</div>
<div style="left:201.10px;top:404.00px;width:59.80px;height:13.00px;background:#a3a3a3"></div>
<div class="t" style="left:202.30px;top:404.00px;height:14.60px;line-height:14.60px;font-size:7.3px;color:#1a1a1a;;transform:scaleX(0.955);transform-origin:0 50%">Iris-setosa</div>
<div style="left:184.00px;top:417.00px;width:16.50px;height:1.00px;background:#e9eef6"></div>
<div style="left:201.10px;top:417.00px;width:59.80px;height:1.00px;background:#bdbdbd"></div>
<div style="left:261.30px;top:417.00px;width:120.20px;height:1.00px;background:#e0e0e0"></div>
<div class="t" style="left:263.70px;top:402.00px;height:14.20px;line-height:14.20px;font-size:7.1px;color:#1e1e1e;;transform:scaleX(0.93);transform-origin:0 50%">1.500</div>
<div style="left:263.40px;top:414.00px;width:7.48px;height:2.60px;background:#3fb7f2;border-radius:1.3px"></div>
<div class="t" style="left:324.00px;top:402.00px;height:14.20px;line-height:14.20px;font-size:7.1px;color:#1e1e1e;;transform:scaleX(0.93);transform-origin:0 50%">0.200</div>
<div style="left:323.70px;top:414.00px;width:5.19px;height:2.60px;background:#3fb7f2;border-radius:1.3px"></div>
<div class="t" style="left:187.20px;top:418.00px;height:14.60px;line-height:14.60px;font-size:7.3px;color:#222;;transform:scaleX(0.88);transform-origin:0 50%">12</div>
<div style="left:201.10px;top:418.00px;width:59.80px;height:14.00px;background:#a3a3a3"></div>
<div class="t" style="left:202.30px;top:418.00px;height:14.60px;line-height:14.60px;font-size:7.3px;color:#1a1a1a;;transform:scaleX(0.955);transform-origin:0 50%">Iris-setosa</div>
<div style="left:184.00px;top:432.00px;width:16.50px;height:1.00px;background:#e9eef6"></div>
<div style="left:201.10px;top:432.00px;width:59.80px;height:1.00px;background:#bdbdbd"></div>
<div style="left:261.30px;top:432.00px;width:120.20px;height:1.00px;background:#e0e0e0"></div>
<div class="t" style="left:263.70px;top:416.00px;height:14.20px;line-height:14.20px;font-size:7.1px;color:#1e1e1e;;transform:scaleX(0.93);transform-origin:0 50%">1.600</div>
<div style="left:263.40px;top:428.00px;width:8.38px;height:2.60px;background:#3fb7f2;border-radius:1.3px"></div>
<div class="t" style="left:324.00px;top:416.00px;height:14.20px;line-height:14.20px;font-size:7.1px;color:#1e1e1e;;transform:scaleX(0.93);transform-origin:0 50%">0.200</div>
<div style="left:323.70px;top:428.00px;width:5.19px;height:2.60px;background:#3fb7f2;border-radius:1.3px"></div>
<div class="t" style="left:187.20px;top:433.00px;height:14.60px;line-height:14.60px;font-size:7.3px;color:#222;;transform:scaleX(0.88);transform-origin:0 50%">13</div>
<div style="left:201.10px;top:433.00px;width:59.80px;height:13.00px;background:#a3a3a3"></div>
<div class="t" style="left:202.30px;top:433.00px;height:14.60px;line-height:14.60px;font-size:7.3px;color:#1a1a1a;;transform:scaleX(0.955);transform-origin:0 50%">Iris-setosa</div>
<div style="left:184.00px;top:446.00px;width:16.50px;height:1.00px;background:#e9eef6"></div>
<div style="left:201.10px;top:446.00px;width:59.80px;height:1.00px;background:#bdbdbd"></div>
<div style="left:261.30px;top:446.00px;width:120.20px;height:1.00px;background:#e0e0e0"></div>
<div class="t" style="left:263.70px;top:431.00px;height:14.20px;line-height:14.20px;font-size:7.1px;color:#1e1e1e;;transform:scaleX(0.93);transform-origin:0 50%">1.400</div>
<div style="left:263.40px;top:443.00px;width:6.59px;height:2.60px;background:#3fb7f2;border-radius:1.3px"></div>
<div class="t" style="left:324.00px;top:431.00px;height:14.20px;line-height:14.20px;font-size:7.1px;color:#1e1e1e;;transform:scaleX(0.93);transform-origin:0 50%">0.100</div>
<div class="t" style="left:187.20px;top:447.00px;height:14.60px;line-height:14.60px;font-size:7.3px;color:#222;;transform:scaleX(0.88);transform-origin:0 50%">14</div>
<div style="left:201.10px;top:447.00px;width:59.80px;height:14.00px;background:#a3a3a3"></div>
<div class="t" style="left:202.30px;top:447.00px;height:14.60px;line-height:14.60px;font-size:7.3px;color:#1a1a1a;;transform:scaleX(0.955);transform-origin:0 50%">Iris-setosa</div>
<div style="left:184.00px;top:461.00px;width:16.50px;height:1.00px;background:#e9eef6"></div>
<div style="left:201.10px;top:461.00px;width:59.80px;height:1.00px;background:#bdbdbd"></div>
<div style="left:261.30px;top:461.00px;width:120.20px;height:1.00px;background:#e0e0e0"></div>
<div class="t" style="left:263.70px;top:445.00px;height:14.20px;line-height:14.20px;font-size:7.1px;color:#1e1e1e;;transform:scaleX(0.93);transform-origin:0 50%">1.100</div>
<div style="left:263.40px;top:457.00px;width:3.90px;height:2.60px;background:#3fb7f2;border-radius:1.3px"></div>
<div class="t" style="left:324.00px;top:445.00px;height:14.20px;line-height:14.20px;font-size:7.1px;color:#1e1e1e;;transform:scaleX(0.93);transform-origin:0 50%">0.100</div>
<div class="t" style="left:187.20px;top:462.00px;height:14.60px;line-height:14.60px;font-size:7.3px;color:#222;;transform:scaleX(0.88);transform-origin:0 50%">15</div>
<div style="left:201.10px;top:462.00px;width:59.80px;height:13.00px;background:#a3a3a3"></div>
<div class="t" style="left:202.30px;top:462.00px;height:14.60px;line-height:14.60px;font-size:7.3px;color:#1a1a1a;;transform:scaleX(0.955);transform-origin:0 50%">Iris-setosa</div>
<div style="left:184.00px;top:475.00px;width:16.50px;height:1.00px;background:#e9eef6"></div>
<div style="left:201.10px;top:475.00px;width:59.80px;height:1.00px;background:#bdbdbd"></div>
<div style="left:261.30px;top:475.00px;width:120.20px;height:1.00px;background:#e0e0e0"></div>
<div class="t" style="left:263.70px;top:460.00px;height:14.20px;line-height:14.20px;font-size:7.1px;color:#1e1e1e;;transform:scaleX(0.93);transform-origin:0 50%">1.200</div>
<div style="left:263.40px;top:472.00px;width:4.79px;height:2.60px;background:#3fb7f2;border-radius:1.3px"></div>
<div class="t" style="left:324.00px;top:460.00px;height:14.20px;line-height:14.20px;font-size:7.1px;color:#1e1e1e;;transform:scaleX(0.93);transform-origin:0 50%">0.200</div>
<div style="left:323.70px;top:472.00px;width:5.19px;height:2.60px;background:#3fb7f2;border-radius:1.3px"></div>
<div class="t" style="left:187.20px;top:476.00px;height:14.60px;line-height:14.60px;font-size:7.3px;color:#222;;transform:scaleX(0.88);transform-origin:0 50%">16</div>
<div style="left:201.10px;top:476.00px;width:59.80px;height:14.00px;background:#a3a3a3"></div>
<div class="t" style="left:202.30px;top:476.00px;height:14.60px;line-height:14.60px;font-size:7.3px;color:#1a1a1a;;transform:scaleX(0.955);transform-origin:0 50%">Iris-setosa</div>
<div style="left:184.00px;top:490.00px;width:16.50px;height:1.00px;background:#e9eef6"></div>
<div style="left:201.10px;top:490.00px;width:59.80px;height:1.00px;background:#bdbdbd"></div>
<div style="left:261.30px;top:490.00px;width:120.20px;height:1.00px;background:#e0e0e0"></div>
<div class="t" style="left:263.70px;top:474.00px;height:14.20px;line-height:14.20px;font-size:7.1px;color:#1e1e1e;;transform:scaleX(0.93);transform-origin:0 50%">1.500</div>
<div style="left:263.40px;top:486.00px;width:7.48px;height:2.60px;background:#3fb7f2;border-radius:1.3px"></div>
<div class="t" style="left:324.00px;top:474.00px;height:14.20px;line-height:14.20px;font-size:7.1px;color:#1e1e1e;;transform:scaleX(0.93);transform-origin:0 50%">0.400</div>
<div style="left:323.70px;top:486.00px;width:9.56px;height:2.60px;background:#3fb7f2;border-radius:1.3px"></div>
<div class="t" style="left:187.20px;top:491.00px;height:14.60px;line-height:14.60px;font-size:7.3px;color:#222;;transform:scaleX(0.88);transform-origin:0 50%">17</div>
<div style="left:201.10px;top:491.00px;width:59.80px;height:13.00px;background:#a3a3a3"></div>
<div class="t" style="left:202.30px;top:491.00px;height:14.60px;line-height:14.60px;font-size:7.3px;color:#1a1a1a;;transform:scaleX(0.955);transform-origin:0 50%">Iris-setosa</div>
<div style="left:184.00px;top:504.00px;width:16.50px;height:1.00px;background:#e9eef6"></div>
<div style="left:201.10px;top:504.00px;width:59.80px;height:1.00px;background:#bdbdbd"></div>
<div style="left:261.30px;top:504.00px;width:120.20px;height:1.00px;background:#e0e0e0"></div>
<div class="t" style="left:263.70px;top:489.00px;height:14.20px;line-height:14.20px;font-size:7.1px;color:#1e1e1e;;transform:scaleX(0.93);transform-origin:0 50%">1.300</div>
<div style="left:263.40px;top:501.00px;width:5.69px;height:2.60px;background:#3fb7f2;border-radius:1.3px"></div>
<div class="t" style="left:324.00px;top:489.00px;height:14.20px;line-height:14.20px;font-size:7.1px;color:#1e1e1e;;transform:scaleX(0.93);transform-origin:0 50%">0.400</div>
<div style="left:323.70px;top:501.00px;width:9.56px;height:2.60px;background:#3fb7f2;border-radius:1.3px"></div>
<div class="t" style="left:187.20px;top:505.00px;height:14.60px;line-height:14.60px;font-size:7.3px;color:#222;;transform:scaleX(0.88);transform-origin:0 50%">18</div>
<div style="left:201.10px;top:505.00px;width:59.80px;height:14.00px;background:#a3a3a3"></div>
<div class="t" style="left:202.30px;top:505.00px;height:14.60px;line-height:14.60px;font-size:7.3px;color:#1a1a1a;;transform:scaleX(0.955);transform-origin:0 50%">Iris-setosa</div>
<div style="left:184.00px;top:519.00px;width:16.50px;height:1.00px;background:#e9eef6"></div>
<div style="left:201.10px;top:519.00px;width:59.80px;height:1.00px;background:#bdbdbd"></div>
<div style="left:261.30px;top:519.00px;width:120.20px;height:1.00px;background:#e0e0e0"></div>
<div class="t" style="left:263.70px;top:503.00px;height:14.20px;line-height:14.20px;font-size:7.1px;color:#1e1e1e;;transform:scaleX(0.93);transform-origin:0 50%">1.400</div>
<div style="left:263.40px;top:515.00px;width:6.59px;height:2.60px;background:#3fb7f2;border-radius:1.3px"></div>
<div class="t" style="left:324.00px;top:503.00px;height:14.20px;line-height:14.20px;font-size:7.1px;color:#1e1e1e;;transform:scaleX(0.93);transform-origin:0 50%">0.300</div>
<div style="left:323.70px;top:515.00px;width:7.38px;height:2.60px;background:#3fb7f2;border-radius:1.3px"></div>
<div class="t" style="left:187.20px;top:520.00px;height:14.60px;line-height:14.60px;font-size:7.3px;color:#222;;transform:scaleX(0.88);transform-origin:0 50%">19</div>
<div style="left:201.10px;top:520.00px;width:59.80px;height:13.00px;background:#a3a3a3"></div>
<div class="t" style="left:202.30px;top:520.00px;height:14.60px;line-height:14.60px;font-size:7.3px;color:#1a1a1a;;transform:scaleX(0.955);transform-origin:0 50%">Iris-setosa</div>
<div style="left:184.00px;top:533.00px;width:16.50px;height:1.00px;background:#e9eef6"></div>
<div style="left:201.10px;top:533.00px;width:59.80px;height:1.00px;background:#bdbdbd"></div>
<div style="left:261.30px;top:533.00px;width:120.20px;height:1.00px;background:#e0e0e0"></div>
<div class="t" style="left:263.70px;top:518.00px;height:14.20px;line-height:14.20px;font-size:7.1px;color:#1e1e1e;;transform:scaleX(0.93);transform-origin:0 50%">1.700</div>
<div style="left:263.40px;top:530.00px;width:9.28px;height:2.60px;background:#3fb7f2;border-radius:1.3px"></div>
<div class="t" style="left:324.00px;top:518.00px;height:14.20px;line-height:14.20px;font-size:7.1px;color:#1e1e1e;;transform:scaleX(0.93);transform-origin:0 50%">0.300</div>
<div style="left:323.70px;top:530.00px;width:7.38px;height:2.60px;background:#3fb7f2;border-radius:1.3px"></div>
<div style="left:260.80px;top:258.30px;width:1.00px;height:275.40px;background:#e0e0e0"></div>
<div style="left:321.10px;top:258.30px;width:1.00px;height:275.40px;background:#e0e0e0"></div>
<div style="left:381.00px;top:258.30px;width:1.00px;height:275.40px;background:#e0e0e0"></div>
<div style="left:388.10px;top:244.10px;width:10.80px;height:289.60px;background:#f0f0f0"></div>
<div style="left:388.40px;top:255.80px;width:10.20px;height:32.80px;background:#cdcdcd"></div>
<svg class="a" style="left:390.50px;top:247.90px" width="6" height="5" viewBox="0 0 6 5"><path d="M0.7 3.6L3 1.3L5.3 3.6" stroke="#505050" stroke-width="1.2" fill="none"/></svg>
<svg class="a" style="left:390.50px;top:525.60px" width="6" height="5" viewBox="0 0 6 5"><path d="M0.7 1.3L3 3.6L5.3 1.3" stroke="#505050" stroke-width="1.2" fill="none"/></svg>
</div></div>
<div style="left:183.00px;top:243.10px;width:216.90px;height:291.60px;border:1px solid #b9bdc4;border-right-color:#d4d7db;border-bottom-color:#d4d7db;box-sizing:border-box"></div>
</div></div>
<div class="win" style="left:440.90px;top:314.20px;width:311.30px;height:228.20px;background:#5bcbcb;z-index:4"><div class="g" style="left:-440.90px;top:-314.20px">
<svg class="a" style="left:447.8px;top:319.8px" width="7.4" height="8.4" viewBox="0 0 7.4 8.4"><rect x="0.3" y="0.3" width="6.8" height="6.6" fill="#fafafa" stroke="#555" stroke-width="0.6"/><rect x="0" y="0" width="7.4" height="1.3" fill="#241a1a"/><rect x="2.7" y="1.3" width="2" height="3.6" fill="#c4c4c4"/><path d="M2.6 1.3V6.9M4.8 1.3V6.9M0.3 3.3H7.1M0.3 5.2H7.1" stroke="#c9c9c9" stroke-width="0.4"/><rect x="5.2" y="5.2" width="1.9" height="1.7" fill="#555"/><path d="M3.2 4.4L3.2 5.6L2.7 6.4L3.6 8H5L5.4 6.2L4 5.4L4 4.4Z" fill="#1c1c1c"/></svg>
<div class="t ti" style="left:526.55px;width:140.00px;text-align:center;top:313.90px;height:19.60px;line-height:19.60px;font-size:9.8px;color:#173c3c;;transform:scaleX(0.895);transform-origin:50% 50%">Select Columns</div>
<div style="left:720.40px;top:315.10px;width:27.10px;height:11.70px;background:#c75050"></div>
<svg class="a" style="left:730.95px;top:318.10px" width="6" height="6" viewBox="0 0 6 6"><path d="M0.8 0.8L5.2 5.2M5.2 0.8L0.8 5.2" stroke="#fff" stroke-width="1.2" fill="none"/></svg>
<div style="left:709.90px;top:318.50px;width:6.20px;height:4.90px;border:0.8px solid #1e5a5a;border-top-width:1.7px;box-sizing:border-box"></div>
<div style="left:694.10px;top:321.70px;width:5.10px;height:1.50px;background:#1e5a5a"></div>
<div style="left:445.60px;top:333.00px;width:301.60px;height:204.80px;background:#f0f0f0"></div>
<div style="left:449.70px;top:349.60px;width:121.80px;height:157.40px;border:1px solid #e4e4e4;box-sizing:border-box;border-radius:1.5px;box-shadow:inset 0.6px 0.6px 0 rgba(255,255,255,0.7)"></div>
<div style="left:454.00px;top:349.10px;width:58.68px;height:2.50px;background:#f0f0f0"></div>
<div class="t" style="left:456.00px;top:342.60px;height:13.00px;line-height:13.00px;font-size:6.5px;color:#1a1a1a;">Available Variables</div>
<div style="left:454.00px;top:357.80px;width:114.70px;height:11.50px;background:#fff;border:1px solid #b4b4b4;box-sizing:border-box"></div>
<div class="t" style="left:456.30px;top:358.10px;height:13.00px;line-height:13.00px;font-size:6.5px;color:#9a9a9a;">Filter</div>
<div style="left:454.00px;top:372.30px;width:114.70px;height:130.00px;background:#fff;border:1px solid #a9adb3;box-sizing:border-box"></div>
<div style="left:456.70px;top:375.10px;width:8.00px;height:7.60px;background:#d5152f;border-radius:1.6px"></div>
<div class="t" style="left:455.70px;width:10.00px;text-align:center;top:372.40px;height:13.20px;line-height:13.20px;font-size:6.6px;color:#fff;text-shadow:none">C</div>
<div class="t" style="left:468.70px;top:371.80px;height:14.20px;line-height:14.20px;font-size:7.1px;color:#1a1a1a;">sepal length</div>
<div style="left:456.70px;top:385.50px;width:8.00px;height:7.60px;background:#d5152f;border-radius:1.6px"></div>
<div class="t" style="left:455.70px;width:10.00px;text-align:center;top:382.80px;height:13.20px;line-height:13.20px;font-size:6.6px;color:#fff;text-shadow:none">C</div>
<div class="t" style="left:468.70px;top:382.20px;height:14.20px;line-height:14.20px;font-size:7.1px;color:#1a1a1a;">sepal width</div>
<div style="left:573.50px;top:349.00px;width:44.50px;height:13.00px;background:linear-gradient(#eff1f4,#e2e5e9);border:1px solid #6db2f3;box-sizing:border-box;border-radius:1px"></div>
<div class="t" style="left:573.50px;width:44.50px;text-align:center;top:349.50px;height:13.00px;line-height:13.00px;font-size:6.5px;color:#1a1a1a;">Up</div>
<div style="left:573.50px;top:370.00px;width:44.50px;height:11.80px;background:#f4f4f4;border:1px solid #dadada;box-sizing:border-box;border-radius:1px"></div>
<div class="t" style="left:573.50px;width:44.50px;text-align:center;top:369.90px;height:13.00px;line-height:13.00px;font-size:6.5px;color:#9a9a9a;">&lt;</div>
<div style="left:573.50px;top:389.00px;width:44.50px;height:12.50px;background:linear-gradient(#f0f0f0,#e3e3e3);border:1px solid #b9b9b9;box-sizing:border-box;border-radius:1px"></div>
<div class="t" style="left:573.50px;width:44.50px;text-align:center;top:389.25px;height:13.00px;line-height:13.00px;font-size:6.5px;color:#1a1a1a;">Down</div>
<div style="left:573.50px;top:420.50px;width:44.50px;height:12.00px;background:#f4f4f4;border:1px solid #dadada;box-sizing:border-box;border-radius:1px"></div>
<div class="t" style="left:573.50px;width:44.50px;text-align:center;top:420.50px;height:13.00px;line-height:13.00px;font-size:6.5px;color:#9a9a9a;">&gt;</div>
<div style="left:573.50px;top:450.30px;width:44.50px;height:12.20px;background:linear-gradient(#f0f0f0,#e3e3e3);border:1px solid #b9b9b9;box-sizing:border-box;border-radius:1px"></div>
<div class="t" style="left:573.50px;width:44.50px;text-align:center;top:450.40px;height:13.00px;line-height:13.00px;font-size:6.5px;color:#1a1a1a;">Up</div>
<div style="left:573.50px;top:470.50px;width:44.50px;height:12.00px;background:#f4f4f4;border:1px solid #dadada;box-sizing:border-box;border-radius:1px"></div>
<div class="t" style="left:573.50px;width:44.50px;text-align:center;top:470.50px;height:13.00px;line-height:13.00px;font-size:6.5px;color:#9a9a9a;">&gt;</div>
<div style="left:573.50px;top:490.00px;width:44.50px;height:12.30px;background:linear-gradient(#f0f0f0,#e3e3e3);border:1px solid #b9b9b9;box-sizing:border-box;border-radius:1px"></div>
<div class="t" style="left:573.50px;width:44.50px;text-align:center;top:490.15px;height:13.00px;line-height:13.00px;font-size:6.5px;color:#1a1a1a;">Down</div>
<div style="left:619.50px;top:349.60px;width:123.50px;height:57.40px;border:1px solid #e4e4e4;box-sizing:border-box;border-radius:1.5px;box-shadow:inset 0.6px 0.6px 0 rgba(255,255,255,0.7)"></div>
<div style="left:624.00px;top:349.10px;width:29.65px;height:2.50px;background:#f0f0f0"></div>
<div class="t" style="left:626.00px;top:342.60px;height:13.00px;line-height:13.00px;font-size:6.5px;color:#1a1a1a;">Features</div>
<div style="left:623.00px;top:358.00px;width:115.70px;height:44.30px;background:#fff;border:1px solid #a9adb3;box-sizing:border-box"></div>
<div style="left:626.30px;top:360.40px;width:8.00px;height:7.60px;background:#d5152f;border-radius:1.6px"></div>
<div class="t" style="left:625.30px;width:10.00px;text-align:center;top:357.70px;height:13.20px;line-height:13.20px;font-size:6.6px;color:#fff;text-shadow:none">C</div>
<div class="t" style="left:638.30px;top:357.10px;height:14.20px;line-height:14.20px;font-size:7.1px;color:#1a1a1a;">petal length</div>
<div style="left:626.30px;top:370.90px;width:8.00px;height:7.60px;background:#d5152f;border-radius:1.6px"></div>
<div class="t" style="left:625.30px;width:10.00px;text-align:center;top:368.20px;height:13.20px;line-height:13.20px;font-size:6.6px;color:#fff;text-shadow:none">C</div>
<div class="t" style="left:638.30px;top:367.60px;height:14.20px;line-height:14.20px;font-size:7.1px;color:#1a1a1a;">petal width</div>
<div style="left:619.50px;top:414.50px;width:123.50px;height:27.00px;border:1px solid #e4e4e4;box-sizing:border-box;border-radius:1.5px;box-shadow:inset 0.6px 0.6px 0 rgba(255,255,255,0.7)"></div>
<div style="left:624.00px;top:414.00px;width:47.23px;height:2.50px;background:#f0f0f0"></div>
<div class="t" style="left:626.00px;top:407.50px;height:13.00px;line-height:13.00px;font-size:6.5px;color:#1a1a1a;">Target Variable</div>
<div style="left:623.00px;top:423.00px;width:115.70px;height:14.00px;background:#fff;border:1px solid #a9adb3;box-sizing:border-box"></div>
<div style="left:626.30px;top:425.50px;width:8.00px;height:7.60px;background:#3aa040;border-radius:1.6px"></div>
<div class="t" style="left:625.30px;width:10.00px;text-align:center;top:422.80px;height:13.20px;line-height:13.20px;font-size:6.6px;color:#fff;text-shadow:none">D</div>
<div class="t" style="left:638.30px;top:422.20px;height:14.20px;line-height:14.20px;font-size:7.1px;color:#1a1a1a;">iris</div>
<div style="left:619.50px;top:449.50px;width:123.50px;height:57.50px;border:1px solid #e4e4e4;box-sizing:border-box;border-radius:1.5px;box-shadow:inset 0.6px 0.6px 0 rgba(255,255,255,0.7)"></div>
<div style="left:624.00px;top:449.00px;width:47.35px;height:2.50px;background:#f0f0f0"></div>
<div class="t" style="left:626.00px;top:442.50px;height:13.00px;line-height:13.00px;font-size:6.5px;color:#1a1a1a;">Meta Attributes</div>
<div style="left:623.00px;top:458.00px;width:115.70px;height:44.30px;background:#fff;border:1px solid #a9adb3;box-sizing:border-box"></div>
<div style="left:450.00px;top:511.00px;width:293.00px;height:22.50px;border:1px solid #e0e0e0;box-sizing:border-box"></div>
<div style="left:454.00px;top:516.50px;width:84.50px;height:12.10px;background:linear-gradient(#f0f0f0,#e3e3e3);border:1px solid #b9b9b9;box-sizing:border-box;border-radius:1px"></div>
<div class="t" style="left:454.00px;width:84.50px;text-align:center;top:516.55px;height:13.00px;line-height:13.00px;font-size:6.5px;color:#1a1a1a;">Report</div>
<div style="left:542.40px;top:516.50px;width:85.60px;height:12.10px;background:linear-gradient(#f0f0f0,#e3e3e3);border:1px solid #b9b9b9;box-sizing:border-box;border-radius:1px"></div>
<div class="t" style="left:542.40px;width:85.60px;text-align:center;top:516.55px;height:13.00px;line-height:13.00px;font-size:6.5px;color:#1a1a1a;">Reset</div>
<div style="left:636.40px;top:518.70px;width:8.20px;height:8.20px;background:#fff;border:0.8px solid #8a8a8a;box-sizing:border-box;border-radius:0.5px"></div>
<svg class="a" style="left:636.40px;top:518.70px" width="8.2" height="8.2" viewBox="0 0 8 8"><path d="M1.6 4.1L3.3 6L6.5 1.9" stroke="#111" stroke-width="1.4" fill="none"/></svg>
<div style="left:653.20px;top:516.50px;width:85.10px;height:12.00px;background:#f4f4f4;border:1px solid #dadada;box-sizing:border-box;border-radius:1px"></div>
<div class="t" style="left:653.20px;width:85.10px;text-align:center;top:516.50px;height:13.00px;line-height:13.00px;font-size:6.5px;color:#9a9a9a;">Send Automatically</div>
</div></div>
</body></html>
